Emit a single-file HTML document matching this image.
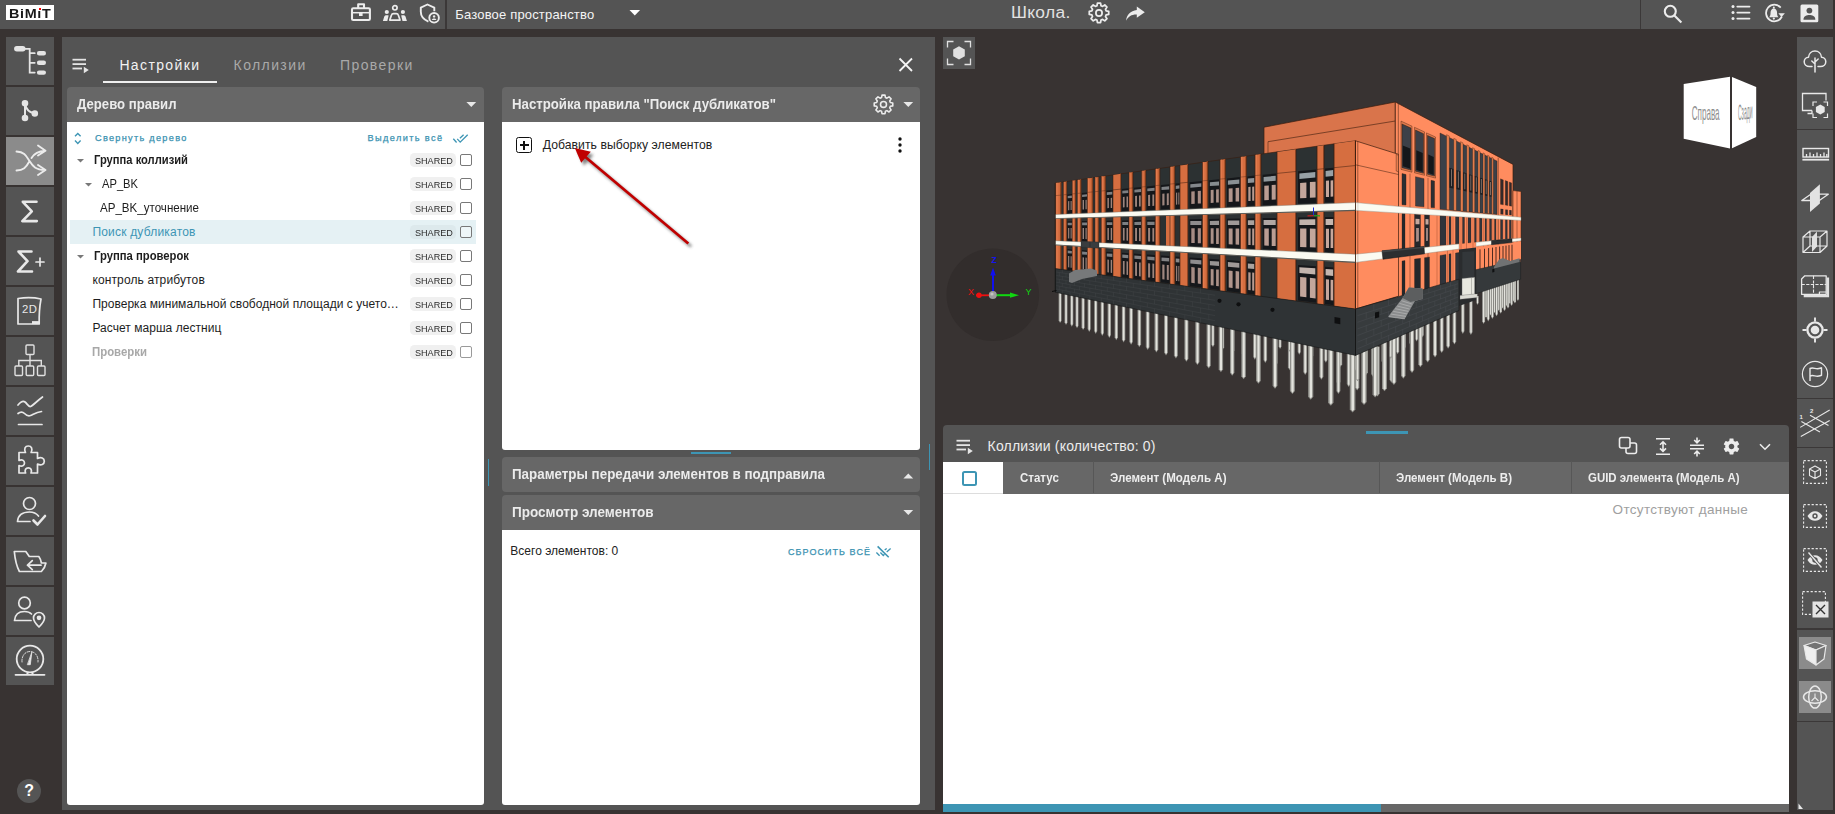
<!DOCTYPE html>
<html lang="ru"><head><meta charset="utf-8"><title>BIMIT</title>
<style>
*{box-sizing:border-box;margin:0;padding:0}
html,body{width:1835px;height:814px;overflow:hidden;background:#383332;font-family:"Liberation Sans",sans-serif;}
body{position:relative;color:#e4e4e4}
.abs{position:absolute}
.t{position:absolute;white-space:nowrap;line-height:1;transform-origin:0 0}
svg{position:absolute;overflow:visible}
.topbar{left:0;top:0;width:1833px;height:29.300px;background:#545454}
.sb{left:6px;width:48px;height:48px;background:#545454}
.sb.on{background:#8b8b8b}
.panel{left:62px;top:37px;width:873px;height:773px;background:#545454}
.hdr{background:#676767;border-radius:4px 4px 0 0;height:35px}
.white{background:#fff}
.row .t{font-size:12px;color:#1d1d1d}
.badge{position:absolute;left:410.300px;width:45.300px;height:13.500px;border-radius:4.500px;background:#f0f0f0}
.badge.sel{background:#dde9ec}
.cb{position:absolute;left:460.200px;width:12px;height:12px;border:1.100px solid #787878;border-radius:2px;background:#fff}
.sh{font-size:9.5px;color:#2b2b2b;left:414.5px}
.rt{left:1797px;top:37px;width:36px;height:773px;background:#545454}
.sep{position:absolute;left:1797px;width:36px;height:1.5px;background:#3b3838}
</style></head><body>
<!-- TOP BAR -->
<div class="abs topbar"></div>
<div class="abs" style="left:6px;top:5px;width:48px;height:15px;background:#fff"></div>
<div class="t" style="left:9.400px;top:7.500px;font-size:12.200px;font-weight:bold;color:#1a1a1a;letter-spacing:.55px;transform:scaleX(1.18)">BiMıT</div>
<div class="abs" style="left:39.100px;top:8.100px;width:2px;height:1.900px;background:#f00"></div>
<div class="abs" style="left:445px;top:0;width:1.5px;height:29px;background:#3b3838"></div>
<div class="abs" style="left:1639.5px;top:0;width:1.5px;height:29px;background:#3b3838"></div>
<!-- briefcase -->
<svg style="left:350px;top:3px" width="22" height="20" viewBox="0 0 22 20" fill="none" stroke="#ececec" stroke-width="2.100" stroke-linejoin="round"><rect x="2" y="5.300" width="17.900" height="11.700" rx="1.200"/><path d="M8.200 5.300V1.200h5.800v4.100"/><path d="M2 9.700h17.900" stroke-width="1.500"/><rect x="9" y="10" width="3.600" height="3" fill="#ececec" stroke="none"/></svg>
<!-- people -->
<svg style="left:382px;top:4px" width="26" height="18" viewBox="0 0 26 18" fill="#ececec"><circle cx="12.900" cy="3.800" r="2.200" fill="none" stroke="#ececec" stroke-width="1.700"/><path d="M7.800 16.100l1.700-5.200c.3-1 1-1.300 2-1.300h2.800c1 0 1.700.3 2 1.300l1.700 5.200z" fill="none" stroke="#ececec" stroke-width="1.700" stroke-linejoin="round"/><circle cx="4.800" cy="8" r="2.100"/><circle cx="20.900" cy="8" r="2.100"/><path d="M.9 16.900l1.300-4.100c.4-1.200 1.400-1.600 2.600-1.600h1.100c.5 0 .8.300.6.900l-1.200 4.800zM24.900 16.900l-1.300-4.100c-.4-1.200-1.400-1.600-2.600-1.600h-1.100c-.5 0-.8.300-.6.900l1.200 4.800z"/></svg>
<!-- shield user -->
<svg style="left:418px;top:3px" width="24" height="22" viewBox="0 0 24 22" fill="none" stroke="#ececec" stroke-width="1.900" stroke-linejoin="round"><path d="M10.400 18.600C5.600 16.600 2.800 13 2.800 8.800V4.600L9.400 1.500l6.900 3.100v3.600"/><circle cx="16.100" cy="14.800" r="4.800"/><circle cx="16.100" cy="13.400" r="1.200" fill="#ececec" stroke="none"/><path d="M13.800 17c.4-1.100 1.200-1.500 2.300-1.500s1.900.4 2.300 1.500z" fill="#ececec" stroke="none"/></svg>
<div class="t" style="letter-spacing:0.173px;left:455.300px;top:7.500px;font-size:13px;color:#f4f4f4">Базовое пространство</div>
<svg style="left:629px;top:10px" width="12" height="7" viewBox="0 0 12 7"><path d="M0.500 0h10.600L5.800 5.400z" fill="#fff"/></svg>
<div class="t" style="letter-spacing:0.352px;left:1010.900px;top:4px;font-size:17.400px;color:#e2e2e2">Школа.</div>
<!-- gear outline -->
<svg style="left:1088px;top:2px" width="22" height="22" viewBox="0 0 24 24" fill="none" stroke="#ececec" stroke-width="1.9" stroke-linejoin="round"><path d="M10.300 2.500h3.400l.5 2.800 1.700.7 2.400-1.600 2.400 2.400-1.600 2.400.7 1.700 2.800.5v3.400l-2.800.5-.7 1.700 1.600 2.400-2.400 2.400-2.400-1.600-1.700.7-.5 2.800h-3.400l-.5-2.800-1.700-.7-2.400 1.600-2.400-2.400 1.600-2.400-.7-1.700-2.800-.5v-3.400l2.800-.5.700-1.700-1.600-2.400 2.400-2.400 2.400 1.600 1.700-.7z" transform="translate(0,-1.200)"/><circle cx="12" cy="11.900" r="3.400"/></svg>
<!-- share arrow -->
<svg style="left:1125.300px;top:5.800px" width="21" height="16" viewBox="0 0 21 16"><path d="M11.800 0.600l8 5.600-8 5.600V8.600C6.800 8.400 3.400 10.400 1 14.800 1.600 9 5.400 4.600 11.800 3.900z" fill="#ececec"/></svg>
<!-- search -->
<svg style="left:1662.200px;top:2.500px" width="22" height="22" viewBox="0 0 22 22" fill="none" stroke="#ececec" stroke-width="2.100"><circle cx="8.300" cy="8.300" r="5.500"/><path d="M12.400 12.400l7 7"/></svg>
<!-- list -->
<svg style="left:1730px;top:3px" width="22" height="20" viewBox="0 0 22 20" fill="#ececec"><circle cx="3" cy="3.600" r="1.500"/><circle cx="3" cy="9.600" r="1.500"/><circle cx="3" cy="15.600" r="1.500"/><rect x="6.400" y="2.700" width="14" height="1.800" rx=".9"/><rect x="6.400" y="8.700" width="14" height="1.800" rx=".9"/><rect x="6.400" y="14.700" width="14" height="1.800" rx=".9"/></svg>
<!-- bell refresh -->
<svg style="left:1763px;top:2px" width="24" height="23" viewBox="0 0 24 23" fill="none" stroke="#ececec" stroke-width="1.800"><path d="M17.700 5.600A8.300 8.300 0 1 0 18.900 14.500"/><path d="M15.300 11.200h6.600l-3.300 3.700z" fill="#ececec" stroke="none"/><g transform="translate(10.800,11) scale(1.250) translate(-11,-11)" fill="#ececec" stroke="none"><path d="M7.300 14.300h7.400c-.9-.9-1.100-1.700-1.100-3.700 0-1.900-1.100-3.300-2.600-3.300s-2.600 1.400-2.600 3.300c0 2-.2 2.800-1.100 3.700z"/><circle cx="11" cy="15.400" r=".9"/><circle cx="11" cy="6.700" r=".8"/></g></svg>
<!-- account box -->
<svg style="left:1799.500px;top:3.600px" width="20" height="20" viewBox="0 0 20 20"><rect x=".5" y=".5" width="17.800" height="17.800" rx="1.500" fill="#ececec"/><circle cx="9.400" cy="6.600" r="2.900" fill="#555"/><path d="M3.500 15.200c0-2.700 3.300-4.100 5.900-4.100s5.900 1.400 5.900 4.100v.6H3.500z" fill="#555"/></svg>
<!-- SIDEBAR -->
<div class="abs sb" style="top:37px"></div><div class="abs sb" style="top:87px"></div><div class="abs sb on" style="top:137px"></div><div class="abs sb" style="top:187px"></div><div class="abs sb" style="top:237px"></div><div class="abs sb" style="top:287px"></div><div class="abs sb" style="top:337px"></div><div class="abs sb" style="top:387px"></div><div class="abs sb" style="top:437px"></div><div class="abs sb" style="top:487px"></div><div class="abs sb" style="top:537px"></div><div class="abs sb" style="top:587px"></div><div class="abs sb" style="top:637px"></div>
<!-- 1 tree -->
<svg style="left:6px;top:37px" width="48" height="48" viewBox="0 0 48 48" fill="none" stroke="#e4e4e4" stroke-width="1.800" stroke-linecap="round"><path d="M10.800 11.800h6" stroke-width="5.400"/><path d="M19 11.800h4.700v23.800h5M23.700 25.800h5M23.700 16.200h5"/><path d="M33.100 16.200h4.700M33.100 25.800h4.700M33.100 35.600h4.700" stroke-width="4.400"/></svg>
<!-- 2 branch -->
<svg style="left:6px;top:87px" width="48" height="48" viewBox="0 0 48 48" fill="#e4e4e4" stroke="#e4e4e4" stroke-width="2"><circle cx="19" cy="16.200" r="2.300"/><circle cx="19" cy="31" r="2.300"/><circle cx="28.800" cy="26.500" r="2.300"/><path d="M19 16v15M19.200 17.500c1 5.500 4.500 8 9.300 9" fill="none"/></svg>
<!-- 3 shuffle -->
<svg style="left:6px;top:137px" width="48" height="48" viewBox="0 0 48 48" fill="none" stroke="#ececec" stroke-width="1.900" stroke-linecap="round" stroke-linejoin="round"><path d="M10.500 14.500c8 .5 9.500 4 13 9.500s6 8.700 15.500 9M10.500 33.500c7-.3 9.500-3 12.500-8.500M25.500 21c2.700-4.500 6.500-6.800 13.500-7M32 8.500l7.500 5.300-7.500 4.700M32 28l7.500 5-7.500 5"/></svg>
<!-- 4 sigma -->
<svg style="left:6px;top:187px" width="48" height="48" viewBox="0 0 48 48" fill="none" stroke="#e8e8e8" stroke-width="2.600" stroke-linecap="round" stroke-linejoin="round"><path d="M30.500 14.800H16.800l9 9.500-9.500 9.800h14.500"/></svg>
<!-- 5 sigma+ -->
<svg style="left:6px;top:237px" width="48" height="48" viewBox="0 0 48 48" fill="none" stroke="#e8e8e8" stroke-width="2.600" stroke-linecap="round" stroke-linejoin="round"><path d="M25.500 14.500H12.500l9 9.700-9.500 10.300h14"/><path d="M30 25h8M34 21v8" stroke-width="1.700"/></svg>
<!-- 6 2D -->
<svg style="left:6px;top:287px" width="48" height="48" viewBox="0 0 48 48" fill="none" stroke="#e8e8e8" stroke-width="1.700" stroke-linejoin="round"><path d="M12 11.500c7-1.200 16-1.200 23 .5-1.500 8-2 16-1.800 25H12z"/><path d="M26 35.600h7" stroke-width="3"/></svg>
<div class="t" style="left:22px;top:304.300px;font-size:11.300px;color:#e8e8e8;letter-spacing:.5px">2D</div>
<!-- 7 org -->
<svg style="left:6px;top:337px" width="48" height="48" viewBox="0 0 48 48" fill="none" stroke="#e0e0e0" stroke-width="1.400"><rect x="20" y="8" width="8" height="9.500" rx="1"/><rect x="9" y="29" width="7.500" height="9.500" rx="1"/><rect x="20.200" y="29" width="7.500" height="9.500" rx="1"/><rect x="31.500" y="29" width="7.500" height="9.500" rx="1"/><path d="M24 17.500V29M12.800 29v-5.500h22.500V29"/></svg>
<!-- 8 chart -->
<svg style="left:6px;top:387px" width="48" height="48" viewBox="0 0 48 48" fill="none" stroke="#e8e8e8" stroke-width="1.700" stroke-linecap="round" stroke-linejoin="round"><path d="M12 18c3-3.500 5-4.500 7-3s3.500 5 5.500 4.500 6.500-5.500 12-9.500M12 26.500c2.500-2 4.500-2 6.500 0s3.500 3 6 2 6-3.500 11-4M12.500 37.500h23.500"/></svg>
<!-- 9 puzzle -->
<svg style="left:6px;top:437px" width="48" height="48" viewBox="0 0 48 48" fill="none" stroke="#e8e8e8" stroke-width="1.700" stroke-linejoin="round"><path d="M13 15.500h6.500c-1.800-3.700-.4-6.500 2.800-6.500s4.600 2.800 2.800 6.500H31.500v6c3.700-1.800 6.800-.4 6.800 2.800s-3.100 4.600-6.800 2.800V36h-6.500c1.200-3-.2-5.200-2.700-5.200S18.400 33 19.600 36H13v-7.500c3 1.400 5.500.2 5.500-2.500s-2.500-4-5.500-2.600z"/></svg>
<!-- 10 user check -->
<svg style="left:6px;top:487px" width="48" height="48" viewBox="0 0 48 48" fill="none" stroke="#e8e8e8" stroke-width="1.700" stroke-linecap="round" stroke-linejoin="round"><circle cx="23.500" cy="16.500" r="6"/><path d="M11.500 34.500c.5-6 5-9.500 12-9.500 4 0 7 1.500 9 4M11.500 34.500H24"/><path d="M27.500 33.500l4 4 7.500-8.500" stroke-width="2.600"/></svg>
<!-- 11 folder -->
<svg style="left:6px;top:537px" width="48" height="48" viewBox="0 0 48 48" fill="none" stroke="#e8e8e8" stroke-width="1.700" stroke-linecap="round" stroke-linejoin="round"><path d="M8.300 14.500h11.500l3.500 5h9.500c1.500 2 2.300 4.500 2.600 6.500h4.500c-.5 3-2.500 6.500-4.500 8.500H13.400C10.500 29 9 22 8.300 14.500z"/><path d="M35 28.200H21.500M26.300 23.700l-4.800 4.500 4.800 4.500"/></svg>
<!-- 12 user pin -->
<svg style="left:6px;top:587px" width="48" height="48" viewBox="0 0 48 48" fill="none" stroke="#e8e8e8" stroke-width="1.700" stroke-linecap="round" stroke-linejoin="round"><circle cx="18.500" cy="16" r="5.800"/><path d="M8.500 33.500c.5-6 4.500-9 10-9 3 0 5.500 1 7 2.500M8.500 33.500H25"/><path d="M33 40c-3.500-3.500-5.500-6.200-5.500-9a5.500 5.500 0 0 1 11 0c0 2.800-2 5.500-5.500 9z"/><circle cx="33" cy="30.800" r="1.500" fill="#e8e8e8"/></svg>
<!-- 13 gauge -->
<svg style="left:6px;top:637px" width="48" height="48" viewBox="0 0 48 48" fill="none" stroke="#e8e8e8" stroke-width="1.800" stroke-linecap="round"><circle cx="24" cy="22" r="13.300"/><path d="M9.500 37.800h29M22 35.500l-1 2M26 35.500l1 2"/><path d="M16 25c-.5-6 3-10.500 8-10.500s8.500 4.500 8 10.500" stroke-width=".9" stroke-dasharray="2.500 1.500"/><path d="M25.800 15.500l-1.500 12.200h-2.600z" fill="#e8e8e8" stroke-width=".8"/></svg>
<!-- help -->
<div class="abs" style="left:17px;top:778.500px;width:24px;height:24px;border-radius:12px;background:#555"></div>
<div class="t" style="left:24.200px;top:782.500px;font-size:16px;font-weight:bold;color:#fff">?</div>
<!-- MAIN PANEL -->
<div class="abs panel"></div>
<svg style="left:72px;top:58px" width="20" height="16" viewBox="0 0 20 16" fill="#e4e4e4"><rect x=".5" y=".8" width="13.500" height="1.800"/><rect x=".5" y="5.200" width="13.500" height="1.800"/><rect x=".5" y="9.600" width="9.500" height="1.800"/><path d="M11.800 8.800l5 3.200-5 3.200z"/></svg>
<div class="t" style="letter-spacing:1.372px;left:119.400px;top:57.700px;font-size:14px;color:#f2f2f2">Настройки</div>
<div class="t" style="letter-spacing:1.393px;left:233.600px;top:57.700px;font-size:14px;color:#a9a9a9">Коллизии</div>
<div class="t" style="letter-spacing:1.408px;left:340px;top:57.700px;font-size:14px;color:#a9a9a9">Проверки</div>
<div class="abs" style="left:103px;top:80.800px;width:114px;height:2.200px;background:#efefef"></div>
<svg style="left:898px;top:57px" width="16" height="16" viewBox="0 0 16 16" stroke="#f4f4f4" stroke-width="1.800"><path d="M1.500 1.500l12.500 12.500M14 1.500L1.500 14"/></svg>
<!-- tree panel -->
<div class="abs hdr" style="left:67px;top:87px;width:417px"></div>
<div class="abs white" style="left:67px;top:122px;width:417px;height:683px;border-radius:0 0 3px 3px"></div>
<div class="t" style="transform:scaleX(0.9383);left:77.100px;top:97px;font-size:14px;font-weight:bold;color:#ebebeb">Дерево правил</div>
<svg style="left:466px;top:101.500px" width="11" height="6" viewBox="0 0 11 6"><path d="M.4 0h9.800L5.300 5z" fill="#e8e8e8"/></svg>
<svg style="left:73px;top:132px" width="10" height="13" viewBox="0 0 10 13" fill="none" stroke="#3d95b4" stroke-width="1.400"><path d="M2 4.200l2.800-2.800 2.800 2.800M2 8.600l2.800 2.800 2.800-2.800"/></svg>
<div class="t" style="letter-spacing:1.277px;left:95px;top:134.100px;font-size:9.200px;color:#3a92b1;-webkit-text-stroke:.25px #3a92b1">Свернуть дерево</div>
<div class="t" style="letter-spacing:1.382px;left:367.500px;top:134.100px;font-size:9.200px;color:#3a92b1;-webkit-text-stroke:.25px #3a92b1">Выделить всё</div>
<svg style="left:452px;top:132.500px" width="18" height="11" viewBox="0 0 18 11" fill="none" stroke="#3d95b4" stroke-width="1.200"><path d="M1.300 5.800L4.600 9.500M5.200 5.900L8.200 9.100 15.700 1.800M7.900 5.300L11.600 1.800" stroke-width="1.300"/></svg>
<div class="abs" style="left:70px;top:220px;width:406px;height:24px;background:#e5f1f4"></div>
<div class="row">
<svg style="left:76.500px;top:158.500px" width="7" height="4" viewBox="0 0 7 4"><path d="M0 0h7L3.500 3.600z" fill="#787878"/></svg>
<div class="t" style="transform:scaleX(0.9314);left:94.300px;top:154px;font-weight:bold">Группа коллизий</div>
<svg style="left:84.500px;top:182.500px" width="7" height="4" viewBox="0 0 7 4"><path d="M0 0h7L3.500 3.600z" fill="#787878"/></svg>
<div class="t" style="transform:scaleX(0.9302);left:102.200px;top:178px">AP_BK</div>
<div class="t" style="transform:scaleX(0.9639);left:100px;top:202px">AP_BK_уточнение</div>
<div class="t" style="letter-spacing:0.199px;left:92.400px;top:226px;color:#3d95b4">Поиск дубликатов</div>
<svg style="left:76.500px;top:254.500px" width="7" height="4" viewBox="0 0 7 4"><path d="M0 0h7L3.500 3.600z" fill="#787878"/></svg>
<div class="t" style="transform:scaleX(0.9390);left:94.100px;top:250px;font-weight:bold">Группа проверок</div>
<div class="t" style="letter-spacing:0.130px;left:92.400px;top:274px">контроль атрибутов</div>
<div class="t" style="letter-spacing:0.027px;left:92.400px;top:298px">Проверка минимальной свободной площади с учето…</div>
<div class="t" style="letter-spacing:0.045px;left:92.400px;top:322px">Расчет марша лестниц</div>
<div class="t" style="transform:scaleX(0.9501);left:92.400px;top:346px;font-weight:bold;color:#a8a8a8">Проверки</div>
</div>
<div class="badge" style="top:153.300px"></div><div class="badge" style="top:177.300px"></div><div class="badge" style="top:201.300px"></div><div class="badge sel" style="top:225.300px"></div><div class="badge" style="top:249.300px"></div><div class="badge" style="top:273.300px"></div><div class="badge" style="top:297.300px"></div><div class="badge" style="top:321.300px"></div><div class="badge" style="top:345.300px"></div>
<div class="t sh" style="transform:scaleX(0.9547);top:155.900px">SHARED</div><div class="t sh" style="transform:scaleX(0.9547);top:179.900px">SHARED</div><div class="t sh" style="transform:scaleX(0.9547);top:203.900px">SHARED</div><div class="t sh" style="transform:scaleX(0.9547);top:227.900px">SHARED</div><div class="t sh" style="transform:scaleX(0.9547);top:251.900px">SHARED</div><div class="t sh" style="transform:scaleX(0.9547);top:275.900px">SHARED</div><div class="t sh" style="transform:scaleX(0.9547);top:299.900px">SHARED</div><div class="t sh" style="transform:scaleX(0.9547);top:323.900px">SHARED</div><div class="t sh" style="transform:scaleX(0.9547);top:347.900px">SHARED</div>
<div class="cb" style="top:154px"></div><div class="cb" style="top:178px"></div><div class="cb" style="top:202px"></div><div class="cb" style="top:226px;background:#eef6f8"></div><div class="cb" style="top:250px"></div><div class="cb" style="top:274px"></div><div class="cb" style="top:298px"></div><div class="cb" style="top:322px"></div><div class="cb" style="top:346px;border-color:#9a9a9a"></div>
<!-- mid panel -->
<div class="abs hdr" style="left:502px;top:87px;width:418px"></div>
<div class="abs white" style="left:502px;top:122px;width:418px;height:328px;border-radius:0 0 3px 3px"></div>
<div class="t" style="transform:scaleX(0.9430);left:512.300px;top:97px;font-size:14px;font-weight:bold;color:#ebebeb">Настройка правила "Поиск дубликатов"</div>
<svg style="left:873px;top:93.500px" width="21" height="21" viewBox="0 0 24 24" fill="none" stroke="#ececec" stroke-width="1.800" stroke-linejoin="round"><path d="M10.300 2.500h3.400l.5 2.800 1.700.7 2.400-1.600 2.400 2.400-1.600 2.400.7 1.700 2.800.5v3.400l-2.800.5-.7 1.700 1.600 2.400-2.400 2.400-2.400-1.600-1.700.7-.5 2.800h-3.400l-.5-2.800-1.700-.7-2.400 1.600-2.400-2.400 1.600-2.400-.7-1.700-2.800-.5v-3.400l2.800-.5.700-1.700-1.600-2.400 2.400-2.400 2.400 1.600 1.700-.7z" transform="translate(0,-1.200)"/><circle cx="12" cy="11.900" r="3.400"/></svg>
<svg style="left:902.500px;top:101.500px" width="11" height="6" viewBox="0 0 11 6"><path d="M.4 0h9.800L5.300 5z" fill="#e8e8e8"/></svg>
<div class="abs" style="left:516px;top:137px;width:16px;height:16px;border:1.500px solid #111;border-radius:2.500px"></div>
<div class="abs" style="left:519.500px;top:144.400px;width:9px;height:1.200px;background:#111"></div>
<div class="abs" style="left:523.400px;top:140.500px;width:1.200px;height:9px;background:#111"></div>
<div class="t" style="letter-spacing:0.050px;left:542.700px;top:138.800px;font-size:12.200px;color:#222">Добавить выборку элементов</div>
<svg style="left:897px;top:136px" width="6" height="18" viewBox="0 0 6 18" fill="#111"><circle cx="3" cy="3" r="1.700"/><circle cx="3" cy="9" r="1.700"/><circle cx="3" cy="15" r="1.700"/></svg>
<!-- red arrow -->
<svg style="left:0;top:0" width="1835" height="814" viewBox="0 0 1835 814"><defs><filter id="ash" x="-20%" y="-20%" width="140%" height="140%"><feGaussianBlur stdDeviation="1.700"/></filter></defs>
<g transform="translate(2.800,3)" opacity=".6" filter="url(#ash)"><path d="M688.300 243.500L583 155" stroke="#333" stroke-width="2.800" fill="none"/><path d="M574.800 148l16 3.800-9.600 10.900z" fill="#333"/></g>
<path d="M688.300 243.500L583 155" stroke="#c00000" stroke-width="2.700" fill="none"/><path d="M574.800 148l16 3.800-9.600 10.900z" fill="#c00000"/></svg>
<!-- resize handles -->
<div class="abs" style="left:691px;top:451.500px;width:40px;height:2px;background:#3d95b4"></div>
<div class="abs" style="left:487.500px;top:459px;width:1.500px;height:27px;background:#3d95b4"></div>
<div class="abs" style="left:928.500px;top:444px;width:1.500px;height:26px;background:#3d95b4"></div>
<!-- params header -->
<div class="abs hdr" style="left:502px;top:457px;width:418px;border-radius:4px"></div>
<div class="t" style="transform:scaleX(0.9547);left:512.300px;top:467px;font-size:14px;font-weight:bold;color:#ebebeb">Параметры передачи элементов в подправила</div>
<svg style="left:902.500px;top:472.500px" width="11" height="6" viewBox="0 0 11 6"><path d="M.4 5.500h9.800L5.300.5z" fill="#e8e8e8"/></svg>
<!-- view header -->
<div class="abs hdr" style="left:502px;top:495px;width:418px"></div>
<div class="abs white" style="left:502px;top:530px;width:418px;height:275px;border-radius:0 0 3px 3px"></div>
<div class="t" style="transform:scaleX(0.9655);left:512.300px;top:505px;font-size:14px;font-weight:bold;color:#ebebeb">Просмотр элементов</div>
<svg style="left:902.500px;top:509.500px" width="11" height="6" viewBox="0 0 11 6"><path d="M.4 0h9.800L5.300 5z" fill="#e8e8e8"/></svg>
<div class="t" style="letter-spacing:0.020px;left:510.300px;top:544.500px;font-size:12px;color:#222">Всего элементов: 0</div>
<div class="t" style="letter-spacing:1.059px;left:788px;top:548.300px;font-size:9px;color:#3a92b1;-webkit-text-stroke:.25px #3a92b1">СБРОСИТЬ ВСЁ</div>
<svg style="left:875px;top:545px" width="18" height="13" viewBox="0 0 18 13" fill="none" stroke="#3d95b4" stroke-width="1.200"><path d="M2.600 1.400L13.700 12.300" stroke-width="1.600"/><path d="M1.400 7.500L4.600 10.800M5.400 7.500L8.300 10.500 9.500 9.300M9.700 5.100L11.700 3.400M11.700 7L15.600 3.500" stroke-width="1.300"/></svg>
<!-- VIEWER -->
<svg class="bld" width="1835" height="814" viewBox="0 0 1835 814" fill="none"><polygon points="1211.3,309.6 1214.4,309.6 1214.4,344.4 1212.9,347.2 1211.3,344.4" fill="#8e8e89"/><polygon points="1212.2,309.6 1213.7,309.6 1213.7,344.4 1212.9,346.1 1212.2,344.4" fill="#e3e3dd"/><polygon points="1221.1,311.8 1224.2,311.8 1224.2,347.3 1222.6,350.2 1221.1,347.3" fill="#8e8e89"/><polygon points="1221.9,311.8 1223.5,311.8 1223.5,347.3 1222.7,349 1221.9,347.3" fill="#e3e3dd"/><polygon points="1231.3,314.1 1234.5,314.1 1234.5,350.3 1232.9,353.2 1231.3,350.3" fill="#8e8e89"/><polygon points="1232.2,314.1 1233.7,314.1 1233.7,350.3 1232.9,352.1 1232.2,350.3" fill="#e3e3dd"/><polygon points="1241.7,316.5 1245.1,316.5 1245.1,353.4 1243.4,356.4 1241.7,353.4" fill="#8e8e89"/><polygon points="1242.7,316.5 1244.3,316.5 1244.3,353.4 1243.5,355.2 1242.7,353.4" fill="#e3e3dd"/><polygon points="1253.1,319 1256.5,319 1256.5,356.8 1254.8,359.8 1253.1,356.8" fill="#8e8e89"/><polygon points="1254,319 1255.7,319 1255.7,356.8 1254.8,358.6 1254,356.8" fill="#e3e3dd"/><polygon points="1263.5,321.4 1267.1,321.4 1267.1,360 1265.3,363 1263.5,360" fill="#8e8e89"/><polygon points="1264.5,321.4 1266.2,321.4 1266.2,360 1265.4,361.8 1264.5,360" fill="#e3e3dd"/><polygon points="1274.1,323.8 1277.7,323.8 1277.7,363.1 1275.9,366.1 1274.1,363.1" fill="#8e8e89"/><polygon points="1275.1,323.8 1276.9,323.8 1276.9,363.1 1276,364.9 1275.1,363.1" fill="#e3e3dd"/><polygon points="1287.9,326.9 1291.6,326.9 1291.6,367.3 1289.7,370.3 1287.9,367.3" fill="#8e8e89"/><polygon points="1288.9,326.9 1290.7,326.9 1290.7,367.3 1289.8,369.1 1288.9,367.3" fill="#e3e3dd"/><polygon points="1303.3,330.4 1307.1,330.4 1307.1,371.9 1305.2,374.9 1303.3,371.9" fill="#8e8e89"/><polygon points="1304.3,330.4 1306.2,330.4 1306.2,371.9 1305.2,373.7 1304.3,371.9" fill="#e3e3dd"/><polygon points="1319.4,334.1 1323.4,334.1 1323.4,376.8 1321.4,379.8 1319.4,376.8" fill="#8e8e89"/><polygon points="1320.5,334.1 1322.4,334.1 1322.4,376.8 1321.5,378.6 1320.5,376.8" fill="#e3e3dd"/><polygon points="1336.4,338 1340.5,338 1340.5,381.9 1338.4,384.9 1336.4,381.9" fill="#8e8e89"/><polygon points="1337.5,338 1339.5,338 1339.5,381.9 1338.5,383.7 1337.5,381.9" fill="#e3e3dd"/><polygon points="1355,342.2 1359.3,342.2 1359.3,387.5 1357.2,390.5 1355,387.5" fill="#8e8e89"/><polygon points="1356.2,342.2 1358.3,342.2 1358.3,387.5 1357.2,389.3 1356.2,387.5" fill="#e3e3dd"/><polygon points="1375.2,346.8 1379.7,346.8 1379.7,393.6 1377.5,396.6 1375.2,393.6" fill="#8e8e89"/><polygon points="1376.5,346.8 1378.6,346.8 1378.6,393.6 1377.5,395.4 1376.5,393.6" fill="#e3e3dd"/><polygon points="1278.6,319 1281.5,319 1281.5,346.3 1280.1,348.9 1278.6,346.3" fill="#8e8e89"/><polygon points="1279.4,319 1280.8,319 1280.8,346.3 1280.1,347.9 1279.4,346.3" fill="#e3e3dd"/><polygon points="1288.1,321.4 1291.1,321.4 1291.1,349.1 1289.6,351.8 1288.1,349.1" fill="#8e8e89"/><polygon points="1289,321.4 1290.4,321.4 1290.4,349.1 1289.7,350.7 1289,349.1" fill="#e3e3dd"/><polygon points="1297.7,323.8 1300.8,323.8 1300.8,352 1299.3,354.7 1297.7,352" fill="#8e8e89"/><polygon points="1298.6,323.8 1300.1,323.8 1300.1,352 1299.3,353.6 1298.6,352" fill="#e3e3dd"/><polygon points="1310.2,326.9 1313.3,326.9 1313.3,355.7 1311.8,358.5 1310.2,355.7" fill="#8e8e89"/><polygon points="1311.1,326.9 1312.6,326.9 1312.6,355.7 1311.8,357.4 1311.1,355.7" fill="#e3e3dd"/><polygon points="1324.2,330.4 1327.4,330.4 1327.4,359.9 1325.8,362.8 1324.2,359.9" fill="#8e8e89"/><polygon points="1325.1,330.4 1326.6,330.4 1326.6,359.9 1325.9,361.6 1325.1,359.9" fill="#e3e3dd"/><polygon points="1338.8,334.1 1342.2,334.1 1342.2,364.2 1340.5,367.2 1338.8,364.2" fill="#8e8e89"/><polygon points="1339.8,334.1 1341.4,334.1 1341.4,364.2 1340.6,366 1339.8,364.2" fill="#e3e3dd"/><polygon points="1354.2,338 1357.7,338 1357.7,368.9 1356,371.9 1354.2,368.9" fill="#8e8e89"/><polygon points="1355.2,338 1356.9,338 1356.9,368.9 1356,370.7 1355.2,368.9" fill="#e3e3dd"/><polygon points="1371.1,342.2 1374.8,342.2 1374.8,374.1 1373,377.1 1371.1,374.1" fill="#8e8e89"/><polygon points="1372.2,342.2 1373.9,342.2 1373.9,374.1 1373,375.9 1372.2,374.1" fill="#e3e3dd"/><polygon points="1389.5,346.8 1393.2,346.8 1393.2,379.7 1391.4,382.7 1389.5,379.7" fill="#8e8e89"/><polygon points="1390.5,346.8 1392.3,346.8 1392.3,379.7 1391.4,381.5 1390.5,379.7" fill="#e3e3dd"/><polygon points="1336.4,343.4 1340.4,343.4 1340.4,391 1338.4,394 1336.4,391" fill="#8e8e89"/><polygon points="1337.5,343.4 1339.4,343.4 1339.4,391 1338.5,392.8 1337.5,391" fill="#e3e3dd"/><polygon points="1346.8,338.3 1350.6,338.3 1350.6,384.1 1348.7,387.1 1346.8,384.1" fill="#8e8e89"/><polygon points="1347.9,338.3 1349.7,338.3 1349.7,384.1 1348.8,385.9 1347.9,384.1" fill="#e3e3dd"/><polygon points="1355.6,333.9 1359.3,333.9 1359.3,378.2 1357.4,381.2 1355.6,378.2" fill="#8e8e89"/><polygon points="1356.6,333.9 1358.4,333.9 1358.4,378.2 1357.5,380 1356.6,378.2" fill="#e3e3dd"/><polygon points="1364.4,329.5 1368,329.5 1368,372.3 1366.2,375.3 1364.4,372.3" fill="#8e8e89"/><polygon points="1365.4,329.5 1367.1,329.5 1367.1,372.3 1366.3,374.1 1365.4,372.3" fill="#e3e3dd"/><polygon points="1373.2,325.1 1376.6,325.1 1376.6,366.4 1374.9,369.4 1373.2,366.4" fill="#8e8e89"/><polygon points="1374.2,325.1 1375.8,325.1 1375.8,366.4 1375,368.2 1374.2,366.4" fill="#e3e3dd"/><polygon points="1381.4,321.1 1384.7,321.1 1384.7,361 1383,364 1381.4,361" fill="#8e8e89"/><polygon points="1382.3,321.1 1383.9,321.1 1383.9,361 1383.1,362.8 1382.3,361" fill="#e3e3dd"/><polygon points="1389.2,317.2 1392.4,317.2 1392.4,355.9 1390.8,358.7 1389.2,355.9" fill="#8e8e89"/><polygon points="1390.1,317.2 1391.7,317.2 1391.7,355.9 1390.9,357.6 1390.1,355.9" fill="#e3e3dd"/><polygon points="1396.1,313.8 1399.2,313.8 1399.2,351.4 1397.6,354.2 1396.1,351.4" fill="#8e8e89"/><polygon points="1396.9,313.8 1398.4,313.8 1398.4,351.4 1397.7,353.1 1396.9,351.4" fill="#e3e3dd"/><polygon points="1402.9,310.3 1405.9,310.3 1405.9,346.9 1404.4,349.6 1402.9,346.9" fill="#8e8e89"/><polygon points="1403.8,310.3 1405.2,310.3 1405.2,346.9 1404.5,348.5 1403.8,346.9" fill="#e3e3dd"/><polygon points="1409.2,307.2 1412.1,307.2 1412.1,342.8 1410.6,345.4 1409.2,342.8" fill="#8e8e89"/><polygon points="1410,307.2 1411.4,307.2 1411.4,342.8 1410.7,344.4 1410,342.8" fill="#e3e3dd"/><polygon points="1415.2,304.2 1418,304.2 1418,338.9 1416.6,341.4 1415.2,338.9" fill="#8e8e89"/><polygon points="1416,304.2 1417.3,304.2 1417.3,338.9 1416.7,340.4 1416,338.9" fill="#e3e3dd"/><polygon points="1421.1,301.3 1423.8,301.3 1423.8,335.1 1422.5,337.5 1421.1,335.1" fill="#8e8e89"/><polygon points="1421.9,301.3 1423.1,301.3 1423.1,335.1 1422.5,336.5 1421.9,335.1" fill="#e3e3dd"/><polygon points="1461.1,296 1464.5,296 1464.5,331 1462.8,334 1461.1,331" fill="#8e8e89"/><polygon points="1462.1,296 1463.7,296 1463.7,331 1462.9,332.8 1462.1,331" fill="#e3e3dd"/><polygon points="1469.2,296 1472.6,296 1472.6,332 1470.9,335 1469.2,332" fill="#8e8e89"/><polygon points="1470.2,296 1471.8,296 1471.8,332 1471,333.8 1470.2,332" fill="#e3e3dd"/><polygon points="1476.3,296 1478.7,296 1478.7,302.8 1477.5,305 1476.3,302.8" fill="#8e8e89"/><polygon points="1477,296 1478.1,296 1478.1,302.8 1477.5,304.1 1477,302.8" fill="#e3e3dd"/><polygon points="1482.1,284.8 1485.1,284.8 1485.1,321.3 1483.6,324 1482.1,321.3" fill="#8e8e89"/><polygon points="1482.9,284.8 1484.4,284.8 1484.4,321.3 1483.7,322.9 1482.9,321.3" fill="#e3e3dd"/><polygon points="1486.8,283.3 1489.7,283.3 1489.7,318.8 1488.2,321.4 1486.8,318.8" fill="#8e8e89"/><polygon points="1487.6,283.3 1489,283.3 1489,318.8 1488.3,320.4 1487.6,318.8" fill="#e3e3dd"/><polygon points="1491,281.7 1493.8,281.7 1493.8,316.4 1492.4,318.9 1491,316.4" fill="#8e8e89"/><polygon points="1491.8,281.7 1493.1,281.7 1493.1,316.4 1492.5,317.9 1491.8,316.4" fill="#e3e3dd"/><polygon points="1495.2,280.2 1497.9,280.2 1497.9,313.9 1496.6,316.3 1495.2,313.9" fill="#8e8e89"/><polygon points="1496,280.2 1497.3,280.2 1497.3,313.9 1496.7,315.4 1496,313.9" fill="#e3e3dd"/><polygon points="1499.4,278.7 1502,278.7 1502,311.4 1500.7,313.8 1499.4,311.4" fill="#8e8e89"/><polygon points="1500.1,278.7 1501.4,278.7 1501.4,311.4 1500.8,312.8 1500.1,311.4" fill="#e3e3dd"/><polygon points="1503.2,277.1 1505.8,277.1 1505.8,309 1504.5,311.2 1503.2,309" fill="#8e8e89"/><polygon points="1504,277.1 1505.2,277.1 1505.2,309 1504.5,310.3 1504,309" fill="#e3e3dd"/><polygon points="1506.8,275.6 1509.2,275.6 1509.2,306.5 1508,308.7 1506.8,306.5" fill="#8e8e89"/><polygon points="1507.5,275.6 1508.6,275.6 1508.6,306.5 1508,307.8 1507.5,306.5" fill="#e3e3dd"/><polygon points="1510.4,274.1 1512.8,274.1 1512.8,304 1511.6,306.1 1510.4,304" fill="#8e8e89"/><polygon points="1511.1,274.1 1512.2,274.1 1512.2,304 1511.6,305.3 1511.1,304" fill="#e3e3dd"/><polygon points="1513.8,272.5 1516,272.5 1516,301.6 1514.9,303.6 1513.8,301.6" fill="#8e8e89"/><polygon points="1514.4,272.5 1515.5,272.5 1515.5,301.6 1514.9,302.8 1514.4,301.6" fill="#e3e3dd"/><polygon points="1516.9,271 1519,271 1519,299.1 1517.9,301 1516.9,299.1" fill="#8e8e89"/><polygon points="1517.4,271 1518.4,271 1518.4,299.1 1517.9,300.2 1517.4,299.1" fill="#e3e3dd"/><polygon points="1485,277 1487,277 1487,316.2 1486,318 1485,316.2" fill="#8e8e89"/><polygon points="1485.6,277 1486.5,277 1486.5,316.2 1486,317.3 1485.6,316.2" fill="#e3e3dd"/><polygon points="1489.4,275.5 1491.4,275.5 1491.4,313.9 1490.4,315.7 1489.4,313.9" fill="#8e8e89"/><polygon points="1490,275.5 1490.9,275.5 1490.9,313.9 1490.4,315 1490,313.9" fill="#e3e3dd"/><polygon points="1493.6,273.9 1495.4,273.9 1495.4,311.6 1494.5,313.3 1493.6,311.6" fill="#8e8e89"/><polygon points="1494.1,273.9 1495,273.9 1495,311.6 1494.5,312.7 1494.1,311.6" fill="#e3e3dd"/><polygon points="1497.8,272.4 1499.6,272.4 1499.6,309.4 1498.7,311 1497.8,309.4" fill="#8e8e89"/><polygon points="1498.3,272.4 1499.2,272.4 1499.2,309.4 1498.7,310.3 1498.3,309.4" fill="#e3e3dd"/><polygon points="1501.7,270.9 1503.5,270.9 1503.5,307.1 1502.6,308.7 1501.7,307.1" fill="#8e8e89"/><polygon points="1502.2,270.9 1503.1,270.9 1503.1,307.1 1502.6,308 1502.2,307.1" fill="#e3e3dd"/><polygon points="1505.4,269.3 1507.2,269.3 1507.2,304.8 1506.3,306.3 1505.4,304.8" fill="#8e8e89"/><polygon points="1505.9,269.3 1506.7,269.3 1506.7,304.8 1506.3,305.7 1505.9,304.8" fill="#e3e3dd"/><polygon points="1509,267.8 1510.6,267.8 1510.6,302.5 1509.8,304 1509,302.5" fill="#8e8e89"/><polygon points="1509.4,267.8 1510.2,267.8 1510.2,302.5 1509.8,303.4 1509.4,302.5" fill="#e3e3dd"/><polygon points="1512.5,266.3 1514.1,266.3 1514.1,300.2 1513.3,301.7 1512.5,300.2" fill="#8e8e89"/><polygon points="1512.9,266.3 1513.7,266.3 1513.7,300.2 1513.3,301.1 1512.9,300.2" fill="#e3e3dd"/><polygon points="1058.6,291.2 1061.6,291.2 1061.6,320.5 1060.1,323.1 1058.6,320.5" fill="#8e8e89"/><polygon points="1059.5,291.2 1060.9,291.2 1060.9,320.5 1060.2,322.1 1059.5,320.5" fill="#e3e3dd"/><polygon points="1064.5,292.4 1067.5,292.4 1067.5,322.2 1066,324.9 1064.5,322.2" fill="#8e8e89"/><polygon points="1065.3,292.4 1066.8,292.4 1066.8,322.2 1066.1,323.8 1065.3,322.2" fill="#e3e3dd"/><polygon points="1070.3,293.6 1073.3,293.6 1073.3,324 1071.8,326.7 1070.3,324" fill="#8e8e89"/><polygon points="1071.1,293.6 1072.6,293.6 1072.6,324 1071.9,325.6 1071.1,324" fill="#e3e3dd"/><polygon points="1075.5,294.7 1078.5,294.7 1078.5,325.5 1077,328.3 1075.5,325.5" fill="#8e8e89"/><polygon points="1076.3,294.7 1077.8,294.7 1077.8,325.5 1077.1,327.2 1076.3,325.5" fill="#e3e3dd"/><polygon points="1081.5,296 1084.7,296 1084.7,327.3 1083.1,330.1 1081.5,327.3" fill="#8e8e89"/><polygon points="1082.4,296 1083.9,296 1083.9,327.3 1083.2,329 1082.4,327.3" fill="#e3e3dd"/><polygon points="1087.6,297.3 1090.8,297.3 1090.8,329.1 1089.2,332 1087.6,329.1" fill="#8e8e89"/><polygon points="1088.5,297.3 1090,297.3 1090,329.1 1089.3,330.9 1088.5,329.1" fill="#e3e3dd"/><polygon points="1094.1,298.7 1097.3,298.7 1097.3,331.1 1095.7,334 1094.1,331.1" fill="#8e8e89"/><polygon points="1095,298.7 1096.5,298.7 1096.5,331.1 1095.8,332.8 1095,331.1" fill="#e3e3dd"/><polygon points="1100.7,300.1 1103.9,300.1 1103.9,333 1102.3,336 1100.7,333" fill="#8e8e89"/><polygon points="1101.6,300.1 1103.2,300.1 1103.2,333 1102.4,334.8 1101.6,333" fill="#e3e3dd"/><polygon points="1107.6,301.5 1111,301.5 1111,335.1 1109.3,338.1 1107.6,335.1" fill="#8e8e89"/><polygon points="1108.6,301.5 1110.2,301.5 1110.2,335.1 1109.4,336.9 1108.6,335.1" fill="#e3e3dd"/><polygon points="1114.6,303 1118,303 1118,337.3 1116.3,340.3 1114.6,337.3" fill="#8e8e89"/><polygon points="1115.5,303 1117.2,303 1117.2,337.3 1116.4,339.1 1115.5,337.3" fill="#e3e3dd"/><polygon points="1121.9,304.6 1125.3,304.6 1125.3,339.5 1123.6,342.5 1121.9,339.5" fill="#8e8e89"/><polygon points="1122.8,304.6 1124.5,304.6 1124.5,339.5 1123.7,341.3 1122.8,339.5" fill="#e3e3dd"/><polygon points="1129.3,306.1 1132.9,306.1 1132.9,341.8 1131.1,344.8 1129.3,341.8" fill="#8e8e89"/><polygon points="1130.3,306.1 1132,306.1 1132,341.8 1131.2,343.6 1130.3,341.8" fill="#e3e3dd"/><polygon points="1137.5,307.9 1141.1,307.9 1141.1,344.3 1139.3,347.3 1137.5,344.3" fill="#8e8e89"/><polygon points="1138.5,307.9 1140.2,307.9 1140.2,344.3 1139.4,346.1 1138.5,344.3" fill="#e3e3dd"/><polygon points="1145.8,309.6 1149.6,309.6 1149.6,346.9 1147.7,349.9 1145.8,346.9" fill="#8e8e89"/><polygon points="1146.9,309.6 1148.7,309.6 1148.7,346.9 1147.8,348.7 1146.9,346.9" fill="#e3e3dd"/><polygon points="1154.5,311.5 1158.3,311.5 1158.3,349.5 1156.4,352.5 1154.5,349.5" fill="#8e8e89"/><polygon points="1155.6,311.5 1157.4,311.5 1157.4,349.5 1156.5,351.3 1155.6,349.5" fill="#e3e3dd"/><polygon points="1164.1,313.5 1167.9,313.5 1167.9,352.5 1166,355.5 1164.1,352.5" fill="#8e8e89"/><polygon points="1165.1,313.5 1167,313.5 1167,352.5 1166.1,354.3 1165.1,352.5" fill="#e3e3dd"/><polygon points="1173.9,315.6 1177.9,315.6 1177.9,355.5 1175.9,358.5 1173.9,355.5" fill="#8e8e89"/><polygon points="1175,315.6 1176.9,315.6 1176.9,355.5 1176,357.3 1175,355.5" fill="#e3e3dd"/><polygon points="1184.4,317.8 1188.4,317.8 1188.4,358.7 1186.4,361.7 1184.4,358.7" fill="#8e8e89"/><polygon points="1185.5,317.8 1187.5,317.8 1187.5,358.7 1186.5,360.5 1185.5,358.7" fill="#e3e3dd"/><polygon points="1195.3,320.1 1199.5,320.1 1199.5,362.1 1197.4,365.1 1195.3,362.1" fill="#8e8e89"/><polygon points="1196.5,320.1 1198.5,320.1 1198.5,362.1 1197.5,363.9 1196.5,362.1" fill="#e3e3dd"/><polygon points="1206.6,322.5 1210.8,322.5 1210.8,365.5 1208.7,368.5 1206.6,365.5" fill="#8e8e89"/><polygon points="1207.8,322.5 1209.8,322.5 1209.8,365.5 1208.8,367.3 1207.8,365.5" fill="#e3e3dd"/><polygon points="1218.7,325 1223.1,325 1223.1,369.2 1220.9,372.2 1218.7,369.2" fill="#8e8e89"/><polygon points="1219.9,325 1222,325 1222,369.2 1221,371 1219.9,369.2" fill="#e3e3dd"/><polygon points="1230,327.4 1234.4,327.4 1234.4,372.7 1232.2,375.7 1230,372.7" fill="#8e8e89"/><polygon points="1231.2,327.4 1233.4,327.4 1233.4,372.7 1232.3,374.5 1231.2,372.7" fill="#e3e3dd"/><polygon points="1241.3,329.8 1245.9,329.8 1245.9,376.2 1243.6,379.2 1241.3,376.2" fill="#8e8e89"/><polygon points="1242.6,329.8 1244.8,329.8 1244.8,376.2 1243.7,378 1242.6,376.2" fill="#e3e3dd"/><polygon points="1256,332.9 1260.8,332.9 1260.8,380.7 1258.4,383.7 1256,380.7" fill="#8e8e89"/><polygon points="1257.4,332.9 1259.6,332.9 1259.6,380.7 1258.5,382.5 1257.4,380.7" fill="#e3e3dd"/><polygon points="1272.6,336.4 1277.4,336.4 1277.4,385.8 1275,388.8 1272.6,385.8" fill="#8e8e89"/><polygon points="1273.9,336.4 1276.3,336.4 1276.3,385.8 1275.1,387.6 1273.9,385.8" fill="#e3e3dd"/><polygon points="1289.9,340.1 1294.9,340.1 1294.9,391.1 1292.4,394.1 1289.9,391.1" fill="#8e8e89"/><polygon points="1291.3,340.1 1293.7,340.1 1293.7,391.1 1292.5,392.9 1291.3,391.1" fill="#e3e3dd"/><polygon points="1308.1,344 1313.3,344 1313.3,396.7 1310.7,399.7 1308.1,396.7" fill="#8e8e89"/><polygon points="1309.6,344 1312.1,344 1312.1,396.7 1310.8,398.5 1309.6,396.7" fill="#e3e3dd"/><polygon points="1328.1,348.2 1333.5,348.2 1333.5,402.8 1330.8,405.8 1328.1,402.8" fill="#8e8e89"/><polygon points="1329.6,348.2 1332.2,348.2 1332.2,402.8 1330.9,404.6 1329.6,402.8" fill="#e3e3dd"/><polygon points="1349.8,352.8 1355.4,352.8 1355.4,409.5 1352.6,412.5 1349.8,409.5" fill="#8e8e89"/><polygon points="1351.4,352.8 1354.1,352.8 1354.1,409.5 1352.7,411.3 1351.4,409.5" fill="#e3e3dd"/><polygon points="1361.3,349.4 1366.7,349.4 1366.7,401.9 1364,404.9 1361.3,401.9" fill="#8e8e89"/><polygon points="1362.8,349.4 1365.4,349.4 1365.4,401.9 1364.1,403.7 1362.8,401.9" fill="#e3e3dd"/><polygon points="1372.5,344.3 1377.7,344.3 1377.7,394.5 1375.1,397.5 1372.5,394.5" fill="#8e8e89"/><polygon points="1374,344.3 1376.5,344.3 1376.5,394.5 1375.2,396.3 1374,394.5" fill="#e3e3dd"/><polygon points="1382,339.9 1387,339.9 1387,388.2 1384.5,391.2 1382,388.2" fill="#8e8e89"/><polygon points="1383.4,339.9 1385.8,339.9 1385.8,388.2 1384.6,390 1383.4,388.2" fill="#e3e3dd"/><polygon points="1391.5,335.5 1396.3,335.5 1396.3,382 1393.9,385 1391.5,382" fill="#8e8e89"/><polygon points="1392.8,335.5 1395.2,335.5 1395.2,382 1394,383.8 1392.8,382" fill="#e3e3dd"/><polygon points="1401,331.1 1405.6,331.1 1405.6,375.7 1403.3,378.7 1401,375.7" fill="#8e8e89"/><polygon points="1402.3,331.1 1404.5,331.1 1404.5,375.7 1403.4,377.5 1402.3,375.7" fill="#e3e3dd"/><polygon points="1409.8,327.1 1414.2,327.1 1414.2,369.9 1412,372.9 1409.8,369.9" fill="#8e8e89"/><polygon points="1411,327.1 1413.2,327.1 1413.2,369.9 1412.1,371.7 1411,369.9" fill="#e3e3dd"/><polygon points="1418.3,323.2 1422.5,323.2 1422.5,364.3 1420.4,367.3 1418.3,364.3" fill="#8e8e89"/><polygon points="1419.5,323.2 1421.5,323.2 1421.5,364.3 1420.5,366.1 1419.5,364.3" fill="#e3e3dd"/><polygon points="1425.6,319.8 1429.8,319.8 1429.8,359.4 1427.7,362.4 1425.6,359.4" fill="#8e8e89"/><polygon points="1426.8,319.8 1428.8,319.8 1428.8,359.4 1427.8,361.2 1426.8,359.4" fill="#e3e3dd"/><polygon points="1433,316.3 1437,316.3 1437,354.6 1435,357.6 1433,354.6" fill="#8e8e89"/><polygon points="1434.1,316.3 1436,316.3 1436,354.6 1435.1,356.4 1434.1,354.6" fill="#e3e3dd"/><polygon points="1439.8,313.2 1443.6,313.2 1443.6,350.1 1441.7,353.1 1439.8,350.1" fill="#8e8e89"/><polygon points="1440.9,313.2 1442.7,313.2 1442.7,350.1 1441.8,351.9 1440.9,350.1" fill="#e3e3dd"/><polygon points="1446.2,310.2 1450,310.2 1450,345.8 1448.1,348.8 1446.2,345.8" fill="#8e8e89"/><polygon points="1447.3,310.2 1449.1,310.2 1449.1,345.8 1448.2,347.6 1447.3,345.8" fill="#e3e3dd"/><polygon points="1452.6,307.3 1456.2,307.3 1456.2,341.6 1454.4,344.6 1452.6,341.6" fill="#8e8e89"/><polygon points="1453.6,307.3 1455.3,307.3 1455.3,341.6 1454.5,343.4 1453.6,341.6" fill="#e3e3dd"/><polygon points="1264,127.2 1395.3,102 1395.3,165 1264,165" fill="#d9744b" stroke="#3b1c0e" stroke-width="0.7"/><path d="M1268 141.7L1395.3 121" stroke="#3b1c0e" stroke-width="0.6"/><path d="M1268 141.7L1268 160" stroke="#3b1c0e" stroke-width="0.5"/><polygon points="1395.3,102 1513,164.4 1513,263.5 1395.3,300" fill="#ff8c5f" stroke="#3b1c0e" stroke-width="0.7"/><path d="M1398.3 103.5L1398.3 160" stroke="#3b1c0e" stroke-width="0.5"/><polygon points="1513,190.6 1521,191.5 1521,259.2 1513,261.5" fill="#ff8c5f" stroke="#3b1c0e" stroke-width="0.5"/><path d="M1517 191L1517 262" stroke="#3b1c0e" stroke-width="0.4"/><polygon points="1401,121.1 1412,126.2 1412,172.2 1401,169.4" fill="#e27a4c" stroke="#3b1c0e" stroke-width="0.4"/><polygon points="1402,124 1411,128.1 1411,170.1 1402,167.7" fill="#3c4048" stroke="#3b1c0e" stroke-width="0.5"/><polygon points="1402.8,145.4 1410.2,148.6 1410.2,168.7 1402.8,166.3" fill="#15171a"/><polygon points="1414.5,127.3 1424.5,131.9 1424.5,175.3 1414.5,172.8" fill="#e27a4c" stroke="#3b1c0e" stroke-width="0.4"/><polygon points="1415.5,130.1 1423.5,133.7 1423.5,173.3 1415.5,171.2" fill="#3c4048" stroke="#3b1c0e" stroke-width="0.5"/><polygon points="1416.3,150.2 1422.7,153.1 1422.7,172 1416.3,169.9" fill="#15171a"/><polygon points="1426.5,132.9 1435.5,137 1435.5,178.1 1426.5,175.8" fill="#e27a4c" stroke="#3b1c0e" stroke-width="0.4"/><polygon points="1427.5,135.5 1434.5,138.6 1434.5,176.1 1427.5,174.3" fill="#3c4048" stroke="#3b1c0e" stroke-width="0.5"/><polygon points="1428.3,154.5 1433.7,157 1433.7,174.9 1428.3,173" fill="#15171a"/><polygon points="1402,173.6 1406,174.5 1406,205 1402,204.7" fill="#2b2f33" stroke="#3b1c0e" stroke-width="0.4"/><polygon points="1415.5,176.7 1424,178.7 1424,206.8 1415.5,206" fill="#3c4048" stroke="#3b1c0e" stroke-width="0.4"/><polygon points="1431,180.3 1434.5,181.1 1434.5,207.8 1431,207.5" fill="#2b2f33" stroke="#3b1c0e" stroke-width="0.4"/><path d="M1410 173.6L1410 295.4" stroke="#3b1c0e" stroke-width="0.4"/><path d="M1428 177.9L1428 289.9" stroke="#3b1c0e" stroke-width="0.4"/><polygon points="1440,133 1497,161.1 1497,214.5 1440,209.2" fill="#3b4048" stroke="#3b1c0e" stroke-width="0.4"/><polygon points="1446.6,134.7 1449.3,136 1449.3,210 1446.6,209.8" fill="#e9804f" stroke="#3b1c0e" stroke-width="0.35"/><polygon points="1453.8,138.3 1456.3,139.6 1456.3,210.7 1453.8,210.5" fill="#e9804f" stroke="#3b1c0e" stroke-width="0.35"/><polygon points="1460.6,141.7 1463,142.9 1463,211.3 1460.6,211.1" fill="#e9804f" stroke="#3b1c0e" stroke-width="0.35"/><polygon points="1466.8,144.8 1469,145.9 1469,211.9 1466.8,211.7" fill="#e9804f" stroke="#3b1c0e" stroke-width="0.35"/><polygon points="1472.6,147.7 1474.7,148.8 1474.7,212.4 1472.6,212.2" fill="#e9804f" stroke="#3b1c0e" stroke-width="0.35"/><polygon points="1478,150.4 1480,151.4 1480,212.9 1478,212.7" fill="#e9804f" stroke="#3b1c0e" stroke-width="0.35"/><polygon points="1483,152.9 1484.8,153.8 1484.8,213.4 1483,213.2" fill="#e9804f" stroke="#3b1c0e" stroke-width="0.35"/><polygon points="1487.6,155.2 1489.2,156 1489.2,213.8 1487.6,213.6" fill="#e9804f" stroke="#3b1c0e" stroke-width="0.35"/><polygon points="1491.8,157.3 1493.3,158.1 1493.3,214.1 1491.8,214" fill="#e9804f" stroke="#3b1c0e" stroke-width="0.35"/><polygon points="1449.5,167.7 1453.5,169 1453.5,188.6 1449.5,187.7" fill="#1c1e22"/><path d="M1451.5 169.2L1451.5 186.2" stroke="#d8b9a8" stroke-width="0.5"/><polygon points="1456.5,170 1460.3,171.2 1460.3,190.1 1456.5,189.3" fill="#1c1e22"/><path d="M1458.4 171.5L1458.4 187.8" stroke="#d8b9a8" stroke-width="0.5"/><polygon points="1463.2,172.2 1466.5,173.3 1466.5,191.4 1463.2,190.7" fill="#1c1e22"/><path d="M1464.8 173.6L1464.8 189.3" stroke="#d8b9a8" stroke-width="0.5"/><polygon points="1469.2,174.2 1472.3,175.2 1472.3,192.7 1469.2,192" fill="#1c1e22"/><path d="M1470.8 175.5L1470.8 190.6" stroke="#d8b9a8" stroke-width="0.5"/><polygon points="1474.9,176 1477.7,176.9 1477.7,193.8 1474.9,193.2" fill="#1c1e22"/><path d="M1476.3 177.3L1476.3 191.9" stroke="#d8b9a8" stroke-width="0.5"/><polygon points="1480.2,177.7 1482.7,178.6 1482.7,194.9 1480.2,194.4" fill="#1c1e22"/><path d="M1481.4 179L1481.4 193.1" stroke="#d8b9a8" stroke-width="0.5"/><polygon points="1485,179.3 1487.3,180.1 1487.3,195.9 1485,195.4" fill="#1c1e22"/><path d="M1486.2 180.5L1486.2 194.2" stroke="#d8b9a8" stroke-width="0.5"/><polygon points="1489.5,180.8 1491.5,181.4 1491.5,196.8 1489.5,196.4" fill="#1c1e22"/><path d="M1490.5 182L1490.5 195.2" stroke="#d8b9a8" stroke-width="0.5"/><path d="M1498.2 157.7L1498.2 265.9" stroke="#3b1c0e" stroke-width="0.5"/><polygon points="1500.5,178.8 1503.3,179.9 1503.3,204.8 1500.5,204.3" fill="#33292a" stroke="#3b1c0e" stroke-width="0.3"/><polygon points="1500.5,208.7 1503.3,209.1 1503.3,214.5 1500.5,214.3" fill="#33292a"/><polygon points="1505.3,180.6 1507.8,181.5 1507.8,205.6 1505.3,205.1" fill="#33292a" stroke="#3b1c0e" stroke-width="0.3"/><polygon points="1505.3,209.4 1507.8,209.8 1507.8,215 1505.3,214.7" fill="#33292a"/><polygon points="1509.3,182.1 1511.6,182.9 1511.6,206.2 1509.3,205.8" fill="#33292a" stroke="#3b1c0e" stroke-width="0.3"/><polygon points="1509.3,210 1511.6,210.3 1511.6,215.3 1509.3,215.1" fill="#33292a"/><polygon points="1402,213.4 1405,213.6 1405,249.1 1402,249.3" fill="#24272b" stroke="#3b1c0e" stroke-width="0.3"/><polygon points="1414.5,214.1 1420.5,214.5 1420.5,247.5 1414.5,248.1" fill="#24272b" stroke="#3b1c0e" stroke-width="0.3"/><polygon points="1415.5,218.7 1419.5,219 1419.5,224.3 1415.5,224.2" fill="#c5a79c"/><polygon points="1416.1,227.9 1418.9,227.9 1418.9,241.3 1416.1,241.7" fill="#a88e88"/><polygon points="1424.5,214.7 1429.5,215 1429.5,246.7 1424.5,247.2" fill="#24272b" stroke="#3b1c0e" stroke-width="0.3"/><polygon points="1425.5,219.1 1428.5,219.3 1428.5,224.4 1425.5,224.4" fill="#c5a79c"/><polygon points="1426.1,227.9 1427.9,227.9 1427.9,240.7 1426.1,241" fill="#a88e88"/><polygon points="1440,215.7 1446,216 1446,245.1 1440,245.6" fill="#30343b" stroke="#3b1c0e" stroke-width="0.3"/><polygon points="1449,216.2 1451,216.3 1451,244.6 1449,244.8" fill="#30343b" stroke="#3b1c0e" stroke-width="0.3"/><polygon points="1455.5,216.6 1459,216.8 1459,243.8 1455.5,244.1" fill="#30343b" stroke="#3b1c0e" stroke-width="0.3"/><polygon points="1462.5,217 1464.5,217.1 1464.5,243.2 1462.5,243.4" fill="#30343b" stroke="#3b1c0e" stroke-width="0.3"/><polygon points="1468,217.3 1471,217.5 1471,242.6 1468,242.9" fill="#30343b" stroke="#3b1c0e" stroke-width="0.3"/><polygon points="1474.5,217.7 1476.3,217.8 1476.3,242.1 1474.5,242.3" fill="#30343b" stroke="#3b1c0e" stroke-width="0.3"/><polygon points="1479.5,218 1482,218.1 1482,241.5 1479.5,241.8" fill="#30343b" stroke="#3b1c0e" stroke-width="0.3"/><polygon points="1485,218.3 1486.6,218.4 1486.6,241.1 1485,241.2" fill="#30343b" stroke="#3b1c0e" stroke-width="0.3"/><polygon points="1489.5,218.6 1491.6,218.7 1491.6,240.6 1489.5,240.8" fill="#30343b" stroke="#3b1c0e" stroke-width="0.3"/><polygon points="1494.5,218.9 1496,219 1496,240.2 1494.5,240.3" fill="#30343b" stroke="#3b1c0e" stroke-width="0.3"/><polygon points="1500.5,219.2 1502.8,219.4 1502.8,239.5 1500.5,239.7" fill="#30343b" stroke="#3b1c0e" stroke-width="0.3"/><polygon points="1505.3,219.5 1507.3,219.7 1507.3,239.1 1505.3,239.3" fill="#30343b" stroke="#3b1c0e" stroke-width="0.3"/><polygon points="1509.3,219.8 1511.3,219.9 1511.3,238.7 1509.3,238.9" fill="#30343b" stroke="#3b1c0e" stroke-width="0.3"/><polygon points="1402,261 1405,260.6 1405,296 1402,297" fill="#24272b" stroke="#3b1c0e" stroke-width="0.3"/><polygon points="1414.5,259.1 1420.5,258.3 1420.5,291.3 1414.5,293.1" fill="#24272b" stroke="#3b1c0e" stroke-width="0.3"/><polygon points="1424.5,257.7 1429.5,256.9 1429.5,288.6 1424.5,290.1" fill="#24272b" stroke="#3b1c0e" stroke-width="0.3"/><polygon points="1440,255.4 1446,254.5 1446,283.5 1440,285.3" fill="#30343b" stroke="#3b1c0e" stroke-width="0.3"/><polygon points="1449,254 1451,253.7 1451,282 1449,282.6" fill="#30343b" stroke="#3b1c0e" stroke-width="0.3"/><polygon points="1455.5,253.1 1459,252.5 1459,279.5 1455.5,280.6" fill="#30343b" stroke="#3b1c0e" stroke-width="0.3"/><polygon points="1479.5,249.5 1482,249.1 1482,272.5 1479.5,273.3" fill="#30343b" stroke="#3b1c0e" stroke-width="0.3"/><polygon points="1485,248.7 1486.6,248.4 1486.6,271.1 1485,271.6" fill="#30343b" stroke="#3b1c0e" stroke-width="0.3"/><polygon points="1489.5,248 1491.6,247.7 1491.6,269.6 1489.5,270.2" fill="#30343b" stroke="#3b1c0e" stroke-width="0.3"/><polygon points="1494.5,247.3 1496,247 1496,268.2 1494.5,268.7" fill="#30343b" stroke="#3b1c0e" stroke-width="0.3"/><polygon points="1500.5,246.4 1502.8,246 1502.8,266.2 1500.5,266.9" fill="#30343b" stroke="#3b1c0e" stroke-width="0.3"/><polygon points="1505.3,245.7 1507.3,245.4 1507.3,264.8 1505.3,265.4" fill="#30343b" stroke="#3b1c0e" stroke-width="0.3"/><polygon points="1509.3,245.1 1511.3,244.8 1511.3,263.6 1509.3,264.2" fill="#30343b" stroke="#3b1c0e" stroke-width="0.3"/><path d="M1437 214.7L1437 285.4" stroke="#a85030" stroke-width="0.5"/><path d="M1447.5 215.3L1447.5 282.3" stroke="#a85030" stroke-width="0.5"/><path d="M1453 215.7L1453 280.6" stroke="#a85030" stroke-width="0.5"/><path d="M1461 216.2L1461 278.2" stroke="#a85030" stroke-width="0.5"/><path d="M1466.5 216.5L1466.5 276.6" stroke="#a85030" stroke-width="0.5"/><path d="M1473 216.9L1473 274.6" stroke="#a85030" stroke-width="0.5"/><path d="M1478 217.3L1478 273.1" stroke="#a85030" stroke-width="0.5"/><path d="M1483.5 217.6L1483.5 271.4" stroke="#a85030" stroke-width="0.5"/><path d="M1488 217.9L1488 270.1" stroke="#a85030" stroke-width="0.5"/><path d="M1493 218.2L1493 268.6" stroke="#a85030" stroke-width="0.5"/><polygon points="1459,249.6 1476,247.4 1476,300 1459,306" fill="#2a2c2e"/><polygon points="1462.3,252 1474,251.3 1474,279 1462.3,280" fill="#33373a"/><polygon points="1462,278.5 1474.7,277.3 1474.7,294.5 1462,295.5" fill="#e8e8e0" stroke="#666" stroke-width="0.4"/><path d="M1471.5 278L1471.5 294.6" stroke="#9a9a94" stroke-width="0.6"/><polygon points="1460,295.5 1477.3,293.7 1477.3,297.5 1460,299.3" fill="#dcdcd5" stroke="#777" stroke-width="0.3"/><polygon points="1476,247.4 1521,241.5 1521,262 1476,272" fill="#ff8c5f"/><path d="M1480 249.4L1480 269.6" stroke="#3a2018" stroke-width="0.9"/><path d="M1484.5 248.8L1484.5 268.5" stroke="#3a2018" stroke-width="0.9"/><path d="M1488.6 248.1L1488.6 267.6" stroke="#3a2018" stroke-width="0.9"/><path d="M1492.5 247.6L1492.5 266.7" stroke="#3a2018" stroke-width="0.9"/><path d="M1496 247L1496 265.9" stroke="#3a2018" stroke-width="0.9"/><path d="M1499.6 246.5L1499.6 265.1" stroke="#3a2018" stroke-width="0.9"/><path d="M1503 246L1503 264.3" stroke="#3a2018" stroke-width="0.9"/><path d="M1506 245.6L1506 263.6" stroke="#3a2018" stroke-width="0.9"/><path d="M1509 245.1L1509 262.9" stroke="#3a2018" stroke-width="0.9"/><path d="M1512 244.7L1512 262.2" stroke="#3a2018" stroke-width="0.9"/><polygon points="1475.7,269.8 1520.6,259.4 1520.6,279.2 1475.7,293.8" fill="#35393b" stroke="#1c1e1f" stroke-width="0.5"/><polygon points="1494,267 1499,259.5 1503,258 1510,261 1519.5,258.2 1519.5,262 1494,268.5" fill="#707273"/><polygon points="1492.3,269.3 1494.4,268.8 1494.4,272 1492.3,272.5" fill="#101112"/><polygon points="1355.5,140.8 1398.5,154.3 1398.5,296.2 1355.5,309" fill="#ff8c5f" stroke="#3b1c0e" stroke-width="0.7"/><path d="M1357.8 141.8L1357.8 308.5" stroke="#3b1c0e" stroke-width="0.5"/><path d="M1355.5 164.8L1398.5 174.5" stroke="#3b1c0e" stroke-width="0.5"/><polygon points="1396.2,154 1398.5,155.6 1398.5,172 1396.2,171" fill="#e67e50" stroke="#3b1c0e" stroke-width="0.4"/><polygon points="1355.5,202.6 1521,217.3 1521,220.4 1355.5,210.4" fill="#fbfbf2" stroke="#8a8a84" stroke-width="0.4"/><polygon points="1355.5,254.2 1459,244 1459,249.1 1355.5,262.4" fill="#fbfbf2" stroke="#8a8a84" stroke-width="0.4"/><polygon points="1476,242.3 1521,237.9 1521,240.7 1476,246.4" fill="#fbfbf2" stroke="#8a8a84" stroke-width="0.4"/><polygon points="1382,250.8 1424,246.4 1424.5,253.8 1383,259.2" fill="#2b2e30" stroke="#111" stroke-width="0.5"/><polygon points="1382,250.8 1424,246.4 1424,248 1382,252.4" fill="#3f4346"/><polygon points="1491.5,240.6 1512,238.8 1512,242.6 1491.5,244.7" fill="#2b2e30" stroke="#111" stroke-width="0.4"/><polygon points="1355.5,309 1459,279.2 1459,310.5 1355.5,355.4" fill="#373b3d" stroke="#17191a" stroke-width="0.6"/><path d="M1357.5 315.6L1458 283.7" stroke="#50555a" stroke-width="0.35"/><path d="M1357.5 322.3L1458 288.1" stroke="#50555a" stroke-width="0.35"/><path d="M1357.5 328.9L1458 292.6" stroke="#50555a" stroke-width="0.35"/><path d="M1357.5 335.5L1458 297.1" stroke="#50555a" stroke-width="0.35"/><path d="M1357.5 342.1L1458 301.6" stroke="#50555a" stroke-width="0.35"/><path d="M1357.5 348.8L1458 306" stroke="#50555a" stroke-width="0.35"/><path d="M1366.2 312.3L1366.2 318.7" stroke="#50555a" stroke-width="0.35"/><path d="M1366.2 325.1L1366.2 331.5" stroke="#50555a" stroke-width="0.35"/><path d="M1366.2 337.9L1366.2 344.3" stroke="#50555a" stroke-width="0.35"/><path d="M1373.8 303.7L1373.8 310" stroke="#50555a" stroke-width="0.35"/><path d="M1373.8 316.2L1373.8 322.5" stroke="#50555a" stroke-width="0.35"/><path d="M1373.8 328.7L1373.8 335" stroke="#50555a" stroke-width="0.35"/><path d="M1373.8 341.2L1373.8 347.5" stroke="#50555a" stroke-width="0.35"/><path d="M1381.2 307.7L1381.2 313.8" stroke="#50555a" stroke-width="0.35"/><path d="M1381.2 319.9L1381.2 326" stroke="#50555a" stroke-width="0.35"/><path d="M1381.2 332L1381.2 338.1" stroke="#50555a" stroke-width="0.35"/><path d="M1388.6 299.5L1388.6 305.4" stroke="#50555a" stroke-width="0.35"/><path d="M1388.6 311.4L1388.6 317.3" stroke="#50555a" stroke-width="0.35"/><path d="M1388.6 323.2L1388.6 329.2" stroke="#50555a" stroke-width="0.35"/><path d="M1388.6 335.1L1388.6 341.1" stroke="#50555a" stroke-width="0.35"/><path d="M1395.7 303.2L1395.7 309" stroke="#50555a" stroke-width="0.35"/><path d="M1395.7 314.8L1395.7 320.6" stroke="#50555a" stroke-width="0.35"/><path d="M1395.7 326.4L1395.7 332.2" stroke="#50555a" stroke-width="0.35"/><path d="M1402.7 295.4L1402.7 301.1" stroke="#50555a" stroke-width="0.35"/><path d="M1402.7 306.7L1402.7 312.3" stroke="#50555a" stroke-width="0.35"/><path d="M1402.7 318L1402.7 323.6" stroke="#50555a" stroke-width="0.35"/><path d="M1402.7 329.3L1402.7 334.9" stroke="#50555a" stroke-width="0.35"/><path d="M1409.5 298.9L1409.5 304.4" stroke="#50555a" stroke-width="0.35"/><path d="M1409.5 310L1409.5 315.5" stroke="#50555a" stroke-width="0.35"/><path d="M1409.5 321L1409.5 326.5" stroke="#50555a" stroke-width="0.35"/><path d="M1416.2 291.5L1416.2 296.9" stroke="#50555a" stroke-width="0.35"/><path d="M1416.2 302.3L1416.2 307.6" stroke="#50555a" stroke-width="0.35"/><path d="M1416.2 313L1416.2 318.4" stroke="#50555a" stroke-width="0.35"/><path d="M1416.2 323.7L1416.2 329.1" stroke="#50555a" stroke-width="0.35"/><path d="M1422.6 294.9L1422.6 300.1" stroke="#50555a" stroke-width="0.35"/><path d="M1422.6 305.4L1422.6 310.6" stroke="#50555a" stroke-width="0.35"/><path d="M1422.6 315.8L1422.6 321.1" stroke="#50555a" stroke-width="0.35"/><path d="M1428.8 287.9L1428.8 293" stroke="#50555a" stroke-width="0.35"/><path d="M1428.8 298.1L1428.8 303.2" stroke="#50555a" stroke-width="0.35"/><path d="M1428.8 308.3L1428.8 313.4" stroke="#50555a" stroke-width="0.35"/><path d="M1428.8 318.5L1428.8 323.6" stroke="#50555a" stroke-width="0.35"/><path d="M1434.8 291.2L1434.8 296.1" stroke="#50555a" stroke-width="0.35"/><path d="M1434.8 301.1L1434.8 306.1" stroke="#50555a" stroke-width="0.35"/><path d="M1434.8 311.1L1434.8 316" stroke="#50555a" stroke-width="0.35"/><path d="M1440.4 284.6L1440.4 289.4" stroke="#50555a" stroke-width="0.35"/><path d="M1440.4 294.3L1440.4 299.1" stroke="#50555a" stroke-width="0.35"/><path d="M1440.4 304L1440.4 308.8" stroke="#50555a" stroke-width="0.35"/><path d="M1440.4 313.7L1440.4 318.6" stroke="#50555a" stroke-width="0.35"/><path d="M1445.7 287.8L1445.7 292.5" stroke="#50555a" stroke-width="0.35"/><path d="M1445.7 297.3L1445.7 302" stroke="#50555a" stroke-width="0.35"/><path d="M1445.7 306.8L1445.7 311.5" stroke="#50555a" stroke-width="0.35"/><path d="M1450.6 281.6L1450.6 286.3" stroke="#50555a" stroke-width="0.35"/><path d="M1450.6 290.9L1450.6 295.6" stroke="#50555a" stroke-width="0.35"/><path d="M1450.6 300.2L1450.6 304.8" stroke="#50555a" stroke-width="0.35"/><path d="M1450.6 309.5L1450.6 314.1" stroke="#50555a" stroke-width="0.35"/><path d="M1454.9 284.9L1454.9 289.5" stroke="#50555a" stroke-width="0.35"/><path d="M1454.9 294.1L1454.9 298.6" stroke="#50555a" stroke-width="0.35"/><path d="M1454.9 303.2L1454.9 307.7" stroke="#50555a" stroke-width="0.35"/><polygon points="1388,316.8 1402.6,298 1408.9,287.6 1422.5,288.6 1422.5,299 1415,301 1404.7,318.9" fill="#8a8c8d"/><polygon points="1402.6,298 1408.9,287.6 1422.5,288.6 1422.5,299 1415,301 1410.5,302" fill="#5c5e5f"/><path d="M1389 316.8L1404.7 318.9" stroke="#c8c8c8" stroke-width="0.5"/><path d="M1391.1 314.1L1405.9 316.4" stroke="#c8c8c8" stroke-width="0.5"/><path d="M1393.2 311.4L1407.1 313.9" stroke="#c8c8c8" stroke-width="0.5"/><path d="M1395.3 308.7L1408.3 311.4" stroke="#c8c8c8" stroke-width="0.5"/><path d="M1397.3 306.1L1409.4 309" stroke="#c8c8c8" stroke-width="0.5"/><path d="M1399.4 303.4L1410.6 306.5" stroke="#c8c8c8" stroke-width="0.5"/><path d="M1401.5 300.7L1411.8 304" stroke="#c8c8c8" stroke-width="0.5"/><polygon points="1375,312.6 1379.2,311.4 1379.2,317.2 1375,318.4" fill="#0e0f10"/><polygon points="1055.3,183.1 1355.5,140.8 1355.5,309 1055.3,268.6" fill="#2c3132" stroke="#3b1c0e" stroke-width="0.6"/><polygon points="1067.4,194.4 1072.2,194 1072.2,213.2 1067.4,213.4" fill="#15171a"/><polygon points="1067.7,196 1071.9,195.6 1071.9,198 1067.7,198.3" fill="#7d7f82"/><polygon points="1068.1,201.2 1069.3,201.1 1069.3,210.2 1068.1,210.2" fill="#9c847c"/><polygon points="1070.6,201 1071.7,201 1071.7,210 1070.6,210.1" fill="#9c847c"/><polygon points="1067.4,221.4 1072.2,221.3 1072.2,241 1067.4,240.8" fill="#15171a"/><polygon points="1067.7,222.8 1071.9,222.7 1071.9,225.3 1067.7,225.3" fill="#7d7f82"/><polygon points="1068.1,227.9 1069.3,227.9 1069.3,238.6 1068.1,238.5" fill="#9c847c"/><polygon points="1070.6,227.9 1071.7,227.9 1071.7,238.6 1070.6,238.6" fill="#9c847c"/><polygon points="1067.4,249 1072.2,249.4 1072.2,270.4 1067.4,269.7" fill="#15171a"/><polygon points="1067.7,250.5 1071.9,250.9 1071.9,253.6 1067.7,253.3" fill="#7d7f82"/><polygon points="1068.1,256 1069.3,256.1 1069.3,267.5 1068.1,267.3" fill="#9c847c"/><polygon points="1070.6,256.2 1071.7,256.3 1071.7,267.8 1070.6,267.7" fill="#9c847c"/><polygon points="1081.7,193 1087.2,192.4 1087.2,212.5 1081.7,212.8" fill="#15171a"/><polygon points="1082.1,194.7 1087,194.2 1087,196.6 1082.1,197.1" fill="#7d7f82"/><polygon points="1082.6,200.1 1084,200 1084,209.4 1082.6,209.5" fill="#9c847c"/><polygon points="1085.5,199.9 1086.7,199.8 1086.7,209.3 1085.5,209.3" fill="#9c847c"/><polygon points="1081.7,221.1 1087.2,221 1087.2,241.7 1081.7,241.4" fill="#15171a"/><polygon points="1082.1,222.6 1087,222.5 1087,225.2 1082.1,225.2" fill="#7d7f82"/><polygon points="1082.6,227.9 1084,227.9 1084,239.1 1082.6,239" fill="#9c847c"/><polygon points="1085.5,227.9 1086.7,227.9 1086.7,239.2 1085.5,239.1" fill="#9c847c"/><polygon points="1081.7,250 1087.2,250.4 1087.2,272.4 1081.7,271.6" fill="#15171a"/><polygon points="1082.1,251.6 1087,252 1087,254.8 1082.1,254.4" fill="#7d7f82"/><polygon points="1082.6,257.3 1084,257.4 1084,269.3 1082.6,269.2" fill="#9c847c"/><polygon points="1085.5,257.6 1086.7,257.7 1086.7,269.7 1085.5,269.5" fill="#9c847c"/><polygon points="1106.3,190.5 1112.7,189.9 1112.7,211.5 1106.3,211.7" fill="#15171a"/><polygon points="1106.8,192.3 1112.4,191.8 1112.4,194.4 1106.8,194.9" fill="#7d7f82"/><polygon points="1107.4,198.1 1108.9,198 1108.9,208.1 1107.4,208.2" fill="#9c847c"/><polygon points="1110.7,197.9 1112.1,197.8 1112.1,208 1110.7,208" fill="#9c847c"/><polygon points="1106.3,220.7 1112.7,220.6 1112.7,242.8 1106.3,242.5" fill="#15171a"/><polygon points="1106.8,222.3 1112.4,222.2 1112.4,225.1 1106.8,225.1" fill="#7d7f82"/><polygon points="1107.4,228 1108.9,228 1108.9,240 1107.4,239.9" fill="#9c847c"/><polygon points="1110.7,228 1112.1,228 1112.1,240.1 1110.7,240.1" fill="#9c847c"/><polygon points="1106.3,251.7 1112.7,252.2 1112.7,275.7 1106.3,274.9" fill="#15171a"/><polygon points="1106.8,253.4 1112.4,253.8 1112.4,256.9 1106.8,256.5" fill="#7d7f82"/><polygon points="1107.4,259.5 1108.9,259.7 1108.9,272.5 1107.4,272.3" fill="#9c847c"/><polygon points="1110.7,259.8 1112.1,260 1112.1,272.9 1110.7,272.7" fill="#9c847c"/><polygon points="1121.8,189 1128.7,188.3 1128.7,210.8 1121.8,211.1" fill="#15171a"/><polygon points="1122.3,190.8 1128.3,190.3 1128.3,193 1122.3,193.5" fill="#7d7f82"/><polygon points="1122.9,196.9 1124.6,196.8 1124.6,207.3 1122.9,207.4" fill="#9c847c"/><polygon points="1126.5,196.6 1128,196.5 1128,207.2 1126.5,207.2" fill="#9c847c"/><polygon points="1121.8,220.5 1128.7,220.3 1128.7,243.5 1121.8,243.2" fill="#15171a"/><polygon points="1122.3,222.1 1128.3,222 1128.3,225 1122.3,225.1" fill="#7d7f82"/><polygon points="1122.9,228 1124.6,228 1124.6,240.6 1122.9,240.5" fill="#9c847c"/><polygon points="1126.5,228 1128,228.1 1128,240.7 1126.5,240.6" fill="#9c847c"/><polygon points="1121.8,252.8 1128.7,253.3 1128.7,277.9 1121.8,277" fill="#15171a"/><polygon points="1122.3,254.6 1128.3,255 1128.3,258.2 1122.3,257.7" fill="#7d7f82"/><polygon points="1122.9,261 1124.6,261.1 1124.6,274.4 1122.9,274.2" fill="#9c847c"/><polygon points="1126.5,261.3 1128,261.4 1128,274.9 1126.5,274.7" fill="#9c847c"/><polygon points="1133.9,187.8 1141.4,187 1141.4,210.3 1133.9,210.6" fill="#15171a"/><polygon points="1134.4,189.7 1141.1,189 1141.1,191.9 1134.4,192.4" fill="#7d7f82"/><polygon points="1135.1,195.9 1137,195.8 1137,206.7 1135.1,206.8" fill="#9c847c"/><polygon points="1139,195.6 1140.7,195.5 1140.7,206.5 1139,206.6" fill="#9c847c"/><polygon points="1133.9,220.3 1141.4,220.1 1141.4,244 1133.9,243.7" fill="#15171a"/><polygon points="1134.4,221.9 1141.1,221.8 1141.1,225 1134.4,225" fill="#7d7f82"/><polygon points="1135.1,228.1 1137,228.1 1137,241 1135.1,240.9" fill="#9c847c"/><polygon points="1139,228.1 1140.7,228.1 1140.7,241.2 1139,241.1" fill="#9c847c"/><polygon points="1133.9,253.6 1141.4,254.2 1141.4,279.6 1133.9,278.6" fill="#15171a"/><polygon points="1134.4,255.5 1141.1,255.9 1141.1,259.3 1134.4,258.7" fill="#7d7f82"/><polygon points="1135.1,262.1 1137,262.2 1137,276 1135.1,275.8" fill="#9c847c"/><polygon points="1139,262.4 1140.7,262.6 1140.7,276.5 1139,276.2" fill="#9c847c"/><polygon points="1146.8,186.5 1155,185.6 1155,209.7 1146.8,210.1" fill="#15171a"/><polygon points="1147.3,188.5 1154.6,187.8 1154.6,190.7 1147.3,191.3" fill="#7d7f82"/><polygon points="1148.1,194.9 1150.1,194.7 1150.1,206 1148.1,206.1" fill="#9c847c"/><polygon points="1152.4,194.6 1154.2,194.4 1154.2,205.8 1152.4,205.9" fill="#9c847c"/><polygon points="1146.8,220 1155,219.9 1155,244.6 1146.8,244.3" fill="#15171a"/><polygon points="1147.3,221.8 1154.6,221.7 1154.6,224.9 1147.3,224.9" fill="#7d7f82"/><polygon points="1148.1,228.1 1150.1,228.1 1150.1,241.5 1148.1,241.4" fill="#9c847c"/><polygon points="1152.4,228.1 1154.2,228.1 1154.2,241.6 1152.4,241.6" fill="#9c847c"/><polygon points="1146.8,254.5 1155,255.1 1155,281.4 1146.8,280.3" fill="#15171a"/><polygon points="1147.3,256.4 1154.6,256.9 1154.6,260.4 1147.3,259.8" fill="#7d7f82"/><polygon points="1148.1,263.2 1150.1,263.4 1150.1,277.6 1148.1,277.4" fill="#9c847c"/><polygon points="1152.4,263.6 1154.2,263.8 1154.2,278.1 1152.4,277.9" fill="#9c847c"/><polygon points="1160.9,185.1 1169.6,184.2 1169.6,209.1 1160.9,209.5" fill="#15171a"/><polygon points="1161.5,187.1 1169.2,186.3 1169.2,189.4 1161.5,190.1" fill="#7e8184"/><polygon points="1162.3,193.8 1164.5,193.6 1164.5,205.3 1162.3,205.4" fill="#9e867e"/><polygon points="1166.8,193.4 1168.8,193.3 1168.8,205.1 1166.8,205.2" fill="#9e867e"/><polygon points="1160.9,219.8 1169.6,219.7 1169.6,245.2 1160.9,244.9" fill="#15171a"/><polygon points="1161.5,221.6 1169.2,221.5 1169.2,224.9 1161.5,224.9" fill="#818284"/><polygon points="1162.3,228.2 1164.5,228.2 1164.5,242 1162.3,241.9" fill="#9e867e"/><polygon points="1166.8,228.2 1168.8,228.2 1168.8,242.2 1166.8,242.1" fill="#9e867e"/><polygon points="1160.9,255.5 1169.6,256.1 1169.6,283.3 1160.9,282.2" fill="#15171a"/><polygon points="1161.5,257.4 1169.2,258 1169.2,261.6 1161.5,261" fill="#818284"/><polygon points="1162.3,264.5 1164.5,264.7 1164.5,279.4 1162.3,279.2" fill="#9e867e"/><polygon points="1166.8,264.9 1168.8,265.1 1168.8,280 1166.8,279.7" fill="#9e867e"/><polygon points="1175.4,183.6 1179.8,183.2 1179.8,208.7 1175.4,208.9" fill="#15171a"/><polygon points="1175.7,185.7 1179.6,185.3 1179.6,188.6 1175.7,188.9" fill="#818487"/><polygon points="1176.1,192.7 1177.2,192.6 1177.2,204.6 1176.1,204.7" fill="#a28981"/><polygon points="1178.4,192.5 1179.4,192.4 1179.4,204.5 1178.4,204.6" fill="#a28981"/><polygon points="1175.4,219.6 1179.8,219.5 1179.8,245.7 1175.4,245.5" fill="#15171a"/><polygon points="1175.7,221.4 1179.6,221.3 1179.6,224.9 1175.7,224.9" fill="#888889"/><polygon points="1176.1,228.2 1177.2,228.2 1177.2,242.5 1176.1,242.4" fill="#a28981"/><polygon points="1178.4,228.2 1179.4,228.2 1179.4,242.6 1178.4,242.5" fill="#a28981"/><polygon points="1175.4,256.5 1179.8,256.8 1179.8,284.7 1175.4,284.1" fill="#15171a"/><polygon points="1175.7,258.4 1179.6,258.7 1179.6,262.5 1175.7,262.2" fill="#888889"/><polygon points="1176.1,265.8 1177.2,265.9 1177.2,281 1176.1,280.9" fill="#a28981"/><polygon points="1178.4,266 1179.4,266.1 1179.4,281.3 1178.4,281.2" fill="#a28981"/><polygon points="1189.5,182.2 1201.9,180.9 1201.9,207.8 1189.5,208.3" fill="#15171a"/><polygon points="1190.3,184.2 1201.3,183.2 1201.3,186.8 1190.3,187.7" fill="#83878b"/><polygon points="1191.3,191.5 1194.7,191.2 1194.7,203.7 1191.3,203.9" fill="#a68c84"/><polygon points="1197.8,191 1200.9,190.7 1200.9,203.4 1197.8,203.6" fill="#a68c84"/><polygon points="1189.5,219.3 1201.9,219.1 1201.9,246.7 1189.5,246.1" fill="#15171a"/><polygon points="1190.3,221.1 1201.3,221 1201.3,224.9 1190.3,224.9" fill="#8e8c8d"/><polygon points="1191.3,228.3 1194.7,228.3 1194.7,243.1 1191.3,243" fill="#a68c84"/><polygon points="1197.8,228.3 1200.9,228.3 1200.9,243.3 1197.8,243.2" fill="#a68c84"/><polygon points="1189.5,257.5 1201.9,258.3 1201.9,287.6 1189.5,286" fill="#15171a"/><polygon points="1190.3,259.5 1201.3,260.3 1201.3,264.4 1190.3,263.5" fill="#8e8c8d"/><polygon points="1191.3,267.1 1194.7,267.4 1194.7,283.2 1191.3,282.8" fill="#a68c84"/><polygon points="1197.8,267.7 1200.9,268 1200.9,284 1197.8,283.6" fill="#a68c84"/><polygon points="1209.2,180.2 1219.5,179.2 1219.5,207 1209.2,207.5" fill="#15171a"/><polygon points="1209.9,182.3 1219,181.4 1219,185.4 1209.9,186.1" fill="#878c8f"/><polygon points="1210.7,190 1213.6,189.7 1213.6,202.8 1210.7,202.9" fill="#ab9188"/><polygon points="1216.1,189.5 1218.8,189.3 1218.8,202.5 1216.1,202.6" fill="#ab9188"/><polygon points="1209.2,219 1219.5,218.8 1219.5,247.4 1209.2,247" fill="#15171a"/><polygon points="1209.9,220.9 1219,220.7 1219,224.9 1209.9,224.9" fill="#989493"/><polygon points="1210.7,228.3 1213.6,228.3 1213.6,243.8 1210.7,243.7" fill="#ab9188"/><polygon points="1216.1,228.3 1218.8,228.3 1218.8,244 1216.1,243.9" fill="#ab9188"/><polygon points="1209.2,258.8 1219.5,259.5 1219.5,290 1209.2,288.6" fill="#15171a"/><polygon points="1209.9,260.9 1219,261.5 1219,265.9 1209.9,265.2" fill="#989493"/><polygon points="1210.7,268.9 1213.6,269.2 1213.6,285.6 1210.7,285.2" fill="#ab9188"/><polygon points="1216.1,269.4 1218.8,269.6 1218.8,286.3 1216.1,285.9" fill="#ab9188"/><polygon points="1227,178.4 1239.9,177.1 1239.9,206.2 1227,206.7" fill="#15171a"/><polygon points="1227.9,180.5 1239.3,179.4 1239.3,183.7 1227.9,184.7" fill="#8a9094"/><polygon points="1228.7,188.5 1232.6,188.2 1232.6,201.8 1228.7,202" fill="#b0958c"/><polygon points="1235.6,188 1239.1,187.7 1239.1,201.5 1235.6,201.6" fill="#b0958c"/><polygon points="1227,218.7 1239.9,218.5 1239.9,248.3 1227,247.7" fill="#15171a"/><polygon points="1227.9,220.6 1239.3,220.4 1239.3,224.9 1227.9,224.9" fill="#a09a98"/><polygon points="1228.7,228.4 1232.6,228.4 1232.6,244.5 1228.7,244.3" fill="#b0958c"/><polygon points="1235.6,228.4 1239.1,228.4 1239.1,244.7 1235.6,244.6" fill="#b0958c"/><polygon points="1227,260.1 1239.9,260.9 1239.9,292.7 1227,291" fill="#15171a"/><polygon points="1227.9,262.1 1239.3,263 1239.3,267.7 1227.9,266.8" fill="#a09a98"/><polygon points="1228.7,270.5 1232.6,270.9 1232.6,288 1228.7,287.5" fill="#b0958c"/><polygon points="1235.6,271.1 1239.1,271.4 1239.1,288.8 1235.6,288.4" fill="#b0958c"/><polygon points="1247.3,176.4 1254.7,175.6 1254.7,205.6 1247.3,205.9" fill="#15171a"/><polygon points="1247.9,178.5 1254.3,177.9 1254.3,182.5 1247.9,183.1" fill="#8e9499"/><polygon points="1248.3,187 1250.6,186.8 1250.6,200.9 1248.3,201" fill="#b69a90"/><polygon points="1252.2,186.7 1254.3,186.5 1254.3,200.7 1252.2,200.8" fill="#b69a90"/><polygon points="1247.3,218.4 1254.7,218.2 1254.7,248.9 1247.3,248.6" fill="#15171a"/><polygon points="1247.9,220.3 1254.3,220.2 1254.3,224.9 1247.9,224.9" fill="#aaa29e"/><polygon points="1248.3,228.4 1250.6,228.5 1250.6,245.1 1248.3,245.1" fill="#b69a90"/><polygon points="1252.2,228.5 1254.3,228.5 1254.3,245.3 1252.2,245.2" fill="#b69a90"/><polygon points="1247.3,261.5 1254.7,262 1254.7,294.6 1247.3,293.7" fill="#15171a"/><polygon points="1247.9,263.6 1254.3,264 1254.3,269 1247.9,268.5" fill="#aaa29e"/><polygon points="1248.3,272.3 1250.6,272.5 1250.6,290.2 1248.3,290" fill="#b69a90"/><polygon points="1252.2,272.6 1254.3,272.8 1254.3,290.7 1252.2,290.4" fill="#b69a90"/><polygon points="1262.6,174.8 1276.4,173.5 1276.4,204.7 1262.6,205.2" fill="#15171a"/><polygon points="1263.6,177 1275.7,175.8 1275.7,180.8 1263.6,181.8" fill="#90989c"/><polygon points="1264.3,185.7 1268.8,185.4 1268.8,199.9 1264.3,200.2" fill="#ba9d93"/><polygon points="1271.7,185.1 1275.7,184.8 1275.7,199.6 1271.7,199.8" fill="#ba9d93"/><polygon points="1262.6,218.1 1276.4,217.9 1276.4,249.9 1262.6,249.3" fill="#15171a"/><polygon points="1263.6,220 1275.7,219.9 1275.7,224.9 1263.6,225" fill="#b1a7a3"/><polygon points="1264.3,228.5 1268.8,228.5 1268.8,245.8 1264.3,245.6" fill="#ba9d93"/><polygon points="1271.7,228.5 1275.7,228.5 1275.7,246 1271.7,245.9" fill="#ba9d93"/><polygon points="1262.6,262.5 1276.4,263.5 1276.4,297.5 1262.6,295.7" fill="#15171a"/><polygon points="1263.6,264.7 1275.7,265.5 1275.7,270.9 1263.6,269.9" fill="#b1a7a3"/><polygon points="1264.3,273.7 1268.8,274.1 1268.8,292.5 1264.3,292" fill="#ba9d93"/><polygon points="1271.7,274.4 1275.7,274.8 1275.7,293.4 1271.7,292.9" fill="#ba9d93"/><polygon points="1298.1,171.3 1316.2,169.5 1316.2,203 1298.1,203.8" fill="#15171a"/><polygon points="1299.4,173.4 1315.3,171.9 1315.3,177.6 1299.4,179" fill="#97a0a5"/><polygon points="1300.1,182.9 1306.4,182.4 1306.4,198 1300.1,198.3" fill="#c3a69b"/><polygon points="1309.9,182.1 1315.6,181.7 1315.6,197.5 1309.9,197.8" fill="#c3a69b"/><polygon points="1298.1,217.5 1316.2,217.2 1316.2,251.6 1298.1,250.8" fill="#15171a"/><polygon points="1299.4,219.5 1315.3,219.3 1315.3,225 1299.4,225" fill="#c2b4ad"/><polygon points="1300.1,228.6 1306.4,228.6 1306.4,247.2 1300.1,246.9" fill="#c3a69b"/><polygon points="1309.9,228.6 1315.6,228.7 1315.6,247.5 1309.9,247.3" fill="#c3a69b"/><polygon points="1298.1,265 1316.2,266.2 1316.2,302.8 1298.1,300.4" fill="#15171a"/><polygon points="1299.4,267.2 1315.3,268.3 1315.3,274.4 1299.4,273.1" fill="#c2b4ad"/><polygon points="1300.1,277 1306.4,277.5 1306.4,297.2 1300.1,296.5" fill="#c3a69b"/><polygon points="1309.9,277.8 1315.6,278.4 1315.6,298.4 1309.9,297.7" fill="#c3a69b"/><polygon points="1325,168.6 1333.6,167.7 1333.6,202.3 1325,202.6" fill="#15171a"/><polygon points="1325.6,170.9 1333.2,170.1 1333.2,176.1 1325.6,176.7" fill="#98a1a6"/><polygon points="1325.9,180.8 1329,180.6 1329,196.9 1325.9,197" fill="#c5a79c"/><polygon points="1330.6,180.5 1333.3,180.3 1333.3,196.6 1330.6,196.8" fill="#c5a79c"/><polygon points="1325,217 1333.6,216.9 1333.6,252.4 1325,252" fill="#15171a"/><polygon points="1325.6,219.1 1333.2,219 1333.2,224.9 1325.6,224.9" fill="#c4b6af"/><polygon points="1325.9,228.7 1329,228.7 1329,248 1325.9,247.9" fill="#c5a79c"/><polygon points="1330.6,228.7 1333.3,228.7 1333.3,248.1 1330.6,248" fill="#c5a79c"/><polygon points="1325,266.8 1333.6,267.4 1333.6,305.2 1325,304" fill="#15171a"/><polygon points="1325.6,269.1 1333.2,269.6 1333.2,275.9 1325.6,275.3" fill="#c4b6af"/><polygon points="1325.9,279.3 1329,279.6 1329,300.1 1325.9,299.7" fill="#c5a79c"/><polygon points="1330.6,279.7 1333.3,280 1333.3,300.6 1330.6,300.3" fill="#c5a79c"/><polygon points="1261,256.9 1277,257.8 1277,298.4 1261,296.3" fill="#2c3132"/><polygon points="1160,215.7 1180,215.1 1180,246.3 1160,245.4" fill="#2c3132"/><polygon points="1166,215.5 1170,215.4 1170,245.9 1166,245.7" fill="#d66e40"/><polygon points="1055.6,183 1061.2,182.3 1061.2,269.4 1055.6,268.6" fill="#d66e40"/><polygon points="1055.6,183 1057.6,182.8 1057.6,268.9 1055.6,268.6" fill="#e27b4d"/><polygon points="1059.9,182.4 1061.2,182.3 1061.2,269.4 1059.9,269.2" fill="#a04e26"/><path d="M1055.6 183L1055.6 268.6" stroke="#3b1c0e" stroke-width="0.4503997335109926"/><path d="M1061.2 182.3L1061.2 269.4" stroke="#3b1c0e" stroke-width="0.4503997335109926"/><polygon points="1063.6,181.9 1066.8,181.5 1066.8,270.1 1063.6,269.7" fill="#d66e40"/><polygon points="1063.6,181.9 1064.7,181.8 1064.7,269.8 1063.6,269.7" fill="#e27b4d"/><polygon points="1065.8,181.6 1066.8,181.5 1066.8,270.1 1065.8,270" fill="#a04e26"/><path d="M1063.6 181.9L1063.6 269.7" stroke="#3b1c0e" stroke-width="0.4610592938041305"/><path d="M1066.8 181.5L1066.8 270.1" stroke="#3b1c0e" stroke-width="0.4610592938041305"/><polygon points="1072.4,180.7 1075.5,180.2 1075.5,271.3 1072.4,270.9" fill="#d66e40"/><polygon points="1072.4,180.7 1073.5,180.5 1073.5,271 1072.4,270.9" fill="#e27b4d"/><polygon points="1074.6,180.4 1075.5,180.2 1075.5,271.3 1074.6,271.2" fill="#a04e26"/><path d="M1072.4 180.7L1072.4 270.9" stroke="#3b1c0e" stroke-width="0.47278481012658247"/><path d="M1075.5 180.2L1075.5 271.3" stroke="#3b1c0e" stroke-width="0.47278481012658247"/><polygon points="1077.5,180 1081.1,179.5 1081.1,272.1 1077.5,271.6" fill="#d66e40"/><polygon points="1077.5,180 1078.8,179.8 1078.8,271.7 1077.5,271.6" fill="#e27b4d"/><polygon points="1080,179.6 1081.1,179.5 1081.1,272.1 1080,271.9" fill="#a04e26"/><path d="M1077.5 180L1077.5 271.6" stroke="#3b1c0e" stroke-width="0.47958027981345774"/><path d="M1081.1 179.5L1081.1 272.1" stroke="#3b1c0e" stroke-width="0.47958027981345774"/><polygon points="1087.5,178.6 1092.8,177.8 1092.8,273.6 1087.5,272.9" fill="#d66e40"/><polygon points="1087.5,178.6 1089.4,178.3 1089.4,273.2 1087.5,272.9" fill="#e27b4d"/><polygon points="1091.5,178 1092.8,177.8 1092.8,273.6 1091.5,273.5" fill="#a04e26"/><path d="M1087.5 178.6L1087.5 272.9" stroke="#3b1c0e" stroke-width="0.4929047301798801"/><path d="M1092.8 177.8L1092.8 273.6" stroke="#3b1c0e" stroke-width="0.4929047301798801"/><polygon points="1095,177.5 1098.7,177 1098.7,274.4 1095,273.9" fill="#d66e40"/><polygon points="1095,177.5 1096.3,177.3 1096.3,274.1 1095,273.9" fill="#e27b4d"/><polygon points="1097.6,177.1 1098.7,177 1098.7,274.4 1097.6,274.3" fill="#a04e26"/><path d="M1095 177.5L1095 273.9" stroke="#3b1c0e" stroke-width="0.5028980679546969"/><path d="M1098.7 177L1098.7 274.4" stroke="#3b1c0e" stroke-width="0.5028980679546969"/><polygon points="1101.4,176.6 1105.6,176 1105.6,275.4 1101.4,274.8" fill="#d66e40"/><polygon points="1101.4,176.6 1102.9,176.4 1102.9,275 1101.4,274.8" fill="#e27b4d"/><polygon points="1104.3,176.2 1105.6,176 1105.6,275.4 1104.3,275.2" fill="#a04e26"/><path d="M1101.4 176.6L1101.4 274.8" stroke="#3b1c0e" stroke-width="0.5114257161892074"/><path d="M1105.6 176L1105.6 275.4" stroke="#3b1c0e" stroke-width="0.5114257161892074"/><polygon points="1113,175 1121,173.8 1121,277.4 1113,276.3" fill="#d66e40"/><polygon points="1120,174 1121,173.8 1121,277.4 1120,277.3" fill="#b85a30"/><path d="M1113 175L1113 276.3" stroke="#3b1c0e" stroke-width="0.5268820786142572"/><path d="M1121 173.8L1121 277.4" stroke="#3b1c0e" stroke-width="0.5268820786142572"/><polygon points="1129,172.7 1133,172.1 1133,279 1129,278.5" fill="#d66e40"/><polygon points="1129,172.7 1130.4,172.5 1130.4,278.7 1129,278.5" fill="#e27b4d"/><polygon points="1131.8,172.3 1133,172.1 1133,279 1131.8,278.9" fill="#a04e26"/><path d="M1129 172.7L1129 278.5" stroke="#3b1c0e" stroke-width="0.548201199200533"/><path d="M1133 172.1L1133 279" stroke="#3b1c0e" stroke-width="0.548201199200533"/><polygon points="1141.8,170.9 1145.8,170.3 1145.8,280.8 1141.8,280.2" fill="#d66e40"/><polygon points="1141.8,170.9 1143.2,170.7 1143.2,280.4 1141.8,280.2" fill="#e27b4d"/><polygon points="1144.6,170.5 1145.8,170.3 1145.8,280.8 1144.6,280.6" fill="#a04e26"/><path d="M1141.8 170.9L1141.8 280.2" stroke="#3b1c0e" stroke-width="0.5652564956695536"/><path d="M1145.8 170.3L1145.8 280.8" stroke="#3b1c0e" stroke-width="0.5652564956695536"/><polygon points="1155.4,169 1159.9,168.4 1159.9,282.7 1155.4,282.1" fill="#d66e40"/><polygon points="1155.4,169 1157,168.8 1157,282.3 1155.4,282.1" fill="#e27b4d"/><polygon points="1158.6,168.5 1159.9,168.4 1159.9,282.7 1158.6,282.5" fill="#a04e26"/><path d="M1155.4 169L1155.4 282.1" stroke="#3b1c0e" stroke-width="0.5833777481678882"/><path d="M1159.9 168.4L1159.9 282.7" stroke="#3b1c0e" stroke-width="0.5833777481678882"/><polygon points="1170,166.9 1174.9,166.2 1174.9,284.7 1170,284" fill="#d66e40"/><polygon points="1170,166.9 1171.7,166.7 1171.7,284.3 1170,284" fill="#e27b4d"/><polygon points="1173.6,166.4 1174.9,166.2 1174.9,284.7 1173.6,284.5" fill="#a04e26"/><path d="M1170 166.9L1170 284" stroke="#3b1c0e" stroke-width="0.6028314457028648"/><path d="M1174.9 166.2L1174.9 284.7" stroke="#3b1c0e" stroke-width="0.6028314457028648"/><polygon points="1180,165.5 1188,164.4 1188,286.4 1180,285.4" fill="#d66e40"/><polygon points="1187,164.5 1188,164.4 1188,286.4 1187,286.3" fill="#b85a30"/><path d="M1180 165.5L1180 285.4" stroke="#3b1c0e" stroke-width="0.6161558960692872"/><path d="M1188 164.4L1188 286.4" stroke="#3b1c0e" stroke-width="0.6161558960692872"/><polygon points="1202.5,162.4 1208,161.6 1208,289.1 1202.5,288.4" fill="#d66e40"/><polygon points="1202.5,162.4 1204.4,162.1 1204.4,288.7 1202.5,288.4" fill="#e27b4d"/><polygon points="1206.7,161.8 1208,161.6 1208,289.1 1206.7,289" fill="#a04e26"/><path d="M1202.5 162.4L1202.5 288.4" stroke="#3b1c0e" stroke-width="0.6461359093937376"/><path d="M1208 161.6L1208 289.1" stroke="#3b1c0e" stroke-width="0.6461359093937376"/><polygon points="1220,159.9 1225.5,159.1 1225.5,291.5 1220,290.8" fill="#d66e40"/><polygon points="1220,159.9 1221.9,159.6 1221.9,291 1220,290.8" fill="#e27b4d"/><polygon points="1224.2,159.3 1225.5,159.1 1225.5,291.5 1224.2,291.3" fill="#a04e26"/><path d="M1220 159.9L1220 290.8" stroke="#3b1c0e" stroke-width="0.6694536975349767"/><path d="M1225.5 159.1L1225.5 291.5" stroke="#3b1c0e" stroke-width="0.6694536975349767"/><polygon points="1240.5,157 1246.5,156.2 1246.5,294.3 1240.5,293.5" fill="#d66e40"/><polygon points="1240.5,157 1242.6,156.7 1242.6,293.8 1240.5,293.5" fill="#e27b4d"/><polygon points="1245.2,156.3 1246.5,156.2 1246.5,294.3 1245.2,294.1" fill="#a04e26"/><path d="M1240.5 157L1240.5 293.5" stroke="#3b1c0e" stroke-width="0.6967688207861427"/><path d="M1246.5 156.2L1246.5 294.3" stroke="#3b1c0e" stroke-width="0.6967688207861427"/><polygon points="1255,155 1261,154.1 1261,296.3 1255,295.5" fill="#d66e40"/><polygon points="1255,155 1257.1,154.7 1257.1,295.8 1255,295.5" fill="#e27b4d"/><polygon points="1259.7,154.3 1261,154.1 1261,296.3 1259.7,296.1" fill="#a04e26"/><path d="M1255 155L1255 295.5" stroke="#3b1c0e" stroke-width="0.7160892738174551"/><path d="M1261 154.1L1261 296.3" stroke="#3b1c0e" stroke-width="0.7160892738174551"/><polygon points="1277,151.9 1296,149.2 1296,301 1277,298.4" fill="#d66e40"/><polygon points="1295,149.3 1296,149.2 1296,301 1295,300.9" fill="#b85a30"/><path d="M1277 151.9L1277 298.4" stroke="#3b1c0e" stroke-width="0.7454030646235843"/><path d="M1296 149.2L1296 301" stroke="#3b1c0e" stroke-width="0.7454030646235843"/><polygon points="1317,146.2 1324,145.2 1324,304.8 1317,303.8" fill="#d66e40"/><polygon points="1323,145.4 1324,145.2 1324,304.8 1323,304.6" fill="#b85a30"/><path d="M1317 146.2L1317 303.8" stroke="#3b1c0e" stroke-width="0.7987008660892738"/><path d="M1324 145.2L1324 304.8" stroke="#3b1c0e" stroke-width="0.7987008660892738"/><polygon points="1334,143.8 1355.5,140.8 1355.5,309 1334,306.1" fill="#d66e40"/><polygon points="1354.5,140.9 1355.5,140.8 1355.5,309 1354.5,308.9" fill="#b85a30"/><path d="M1334 143.8L1334 306.1" stroke="#3b1c0e" stroke-width="0.8213524317121919"/><path d="M1355.5 140.8L1355.5 309" stroke="#3b1c0e" stroke-width="0.8213524317121919"/><path d="M1055.6 195.6L1061.2 195.1" stroke="#3b1c0e" stroke-width="0.35"/><path d="M1063.6 194.8L1066.8 194.5" stroke="#3b1c0e" stroke-width="0.35"/><path d="M1072.4 193.9L1075.5 193.6" stroke="#3b1c0e" stroke-width="0.35"/><path d="M1077.5 193.4L1081.1 193.1" stroke="#3b1c0e" stroke-width="0.35"/><path d="M1087.5 192.4L1092.8 191.9" stroke="#3b1c0e" stroke-width="0.35"/><path d="M1095 191.7L1098.7 191.3" stroke="#3b1c0e" stroke-width="0.35"/><path d="M1101.4 191L1105.6 190.6" stroke="#3b1c0e" stroke-width="0.35"/><path d="M1113 189.9L1121 189.1" stroke="#3b1c0e" stroke-width="0.5"/><path d="M1129 188.3L1133 187.9" stroke="#3b1c0e" stroke-width="0.35"/><path d="M1141.8 187L1145.8 186.6" stroke="#3b1c0e" stroke-width="0.35"/><path d="M1155.4 185.6L1159.9 185.2" stroke="#3b1c0e" stroke-width="0.35"/><path d="M1170 184.1L1174.9 183.6" stroke="#3b1c0e" stroke-width="0.35"/><path d="M1180 183.1L1188 182.3" stroke="#3b1c0e" stroke-width="0.5"/><path d="M1202.5 180.9L1208 180.3" stroke="#3b1c0e" stroke-width="0.35"/><path d="M1220 179.1L1225.5 178.6" stroke="#3b1c0e" stroke-width="0.35"/><path d="M1240.5 177.1L1246.5 176.5" stroke="#3b1c0e" stroke-width="0.35"/><path d="M1255 175.6L1261 175" stroke="#3b1c0e" stroke-width="0.35"/><path d="M1277 173.4L1296 171.5" stroke="#3b1c0e" stroke-width="0.5"/><path d="M1317 169.4L1324 168.7" stroke="#3b1c0e" stroke-width="0.5"/><path d="M1334 167.7L1355.5 165.5" stroke="#3b1c0e" stroke-width="0.5"/><polygon points="1055.3,214.5 1355.5,202.6 1355.5,210.4 1055.3,218.5" fill="#fbfbf2" stroke="#77776f" stroke-width="0.4"/><polygon points="1055.3,240.7 1355.5,254.2 1355.5,262.4 1055.3,244.9" fill="#fbfbf2" stroke="#77776f" stroke-width="0.4"/><polygon points="1055.3,218.2 1355.5,209.8 1355.5,211 1055.3,218.8" fill="#5a5a55"/><polygon points="1055.3,244.6 1355.5,261.8 1355.5,263 1055.3,245.2" fill="#5a5a55"/><polygon points="1081,241.3 1099,242.1 1099,248.2 1081,247.2" fill="#3a3d3f" stroke="#222" stroke-width="0.3"/><path d="M1090 242.3L1090 246.9" stroke="#222" stroke-width="0.5"/><path d="M1355.5 202.6L1355.5 210.4" stroke="#888" stroke-width="0.6"/><path d="M1355.5 254.2L1355.5 262.4" stroke="#888" stroke-width="0.6"/><path d="M1357.9 202.6L1357.9 210.7" stroke="#999" stroke-width="0.4"/><path d="M1357.9 254.2L1357.9 262.4" stroke="#999" stroke-width="0.4"/><polygon points="1055.3,268.6 1355.5,309 1355.5,355.4 1055.3,292.2" fill="#2f3335" stroke="#17191a" stroke-width="0.6"/><path d="M1056.3 272.1L1215 295.2" stroke="#474b4e" stroke-width="0.35"/><path d="M1056.3 275.5L1215 300.3" stroke="#474b4e" stroke-width="0.35"/><path d="M1056.3 278.9L1215 305.4" stroke="#474b4e" stroke-width="0.35"/><path d="M1056.3 282.2L1215 310.5" stroke="#474b4e" stroke-width="0.35"/><path d="M1056.3 285.6L1215 315.6" stroke="#474b4e" stroke-width="0.35"/><path d="M1056.3 289L1215 320.7" stroke="#474b4e" stroke-width="0.35"/><path d="M1059.3 272.5L1059.3 275.9" stroke="#474b4e" stroke-width="0.35"/><path d="M1059.3 279.4L1059.3 282.8" stroke="#474b4e" stroke-width="0.35"/><path d="M1059.3 286.2L1059.3 289.6" stroke="#474b4e" stroke-width="0.35"/><path d="M1062.3 269.5L1062.3 273" stroke="#474b4e" stroke-width="0.35"/><path d="M1062.3 276.4L1062.3 279.9" stroke="#474b4e" stroke-width="0.35"/><path d="M1062.3 283.3L1062.3 286.7" stroke="#474b4e" stroke-width="0.35"/><path d="M1062.3 290.2L1062.3 293.6" stroke="#474b4e" stroke-width="0.35"/><path d="M1066 273.5L1066 277" stroke="#474b4e" stroke-width="0.35"/><path d="M1066 280.5L1066 284" stroke="#474b4e" stroke-width="0.35"/><path d="M1066 287.4L1066 290.9" stroke="#474b4e" stroke-width="0.35"/><path d="M1070.1 270.6L1070.1 274.1" stroke="#474b4e" stroke-width="0.35"/><path d="M1070.1 277.6L1070.1 281.2" stroke="#474b4e" stroke-width="0.35"/><path d="M1070.1 284.7L1070.1 288.2" stroke="#474b4e" stroke-width="0.35"/><path d="M1070.1 291.7L1070.1 295.3" stroke="#474b4e" stroke-width="0.35"/><path d="M1074.5 274.7L1074.5 278.3" stroke="#474b4e" stroke-width="0.35"/><path d="M1074.5 281.9L1074.5 285.5" stroke="#474b4e" stroke-width="0.35"/><path d="M1074.5 289.1L1074.5 292.6" stroke="#474b4e" stroke-width="0.35"/><path d="M1079.4 271.8L1079.4 275.4" stroke="#474b4e" stroke-width="0.35"/><path d="M1079.4 279.1L1079.4 282.7" stroke="#474b4e" stroke-width="0.35"/><path d="M1079.4 286.3L1079.4 290" stroke="#474b4e" stroke-width="0.35"/><path d="M1079.4 293.6L1079.4 297.2" stroke="#474b4e" stroke-width="0.35"/><path d="M1084.5 276.2L1084.5 279.9" stroke="#474b4e" stroke-width="0.35"/><path d="M1084.5 283.6L1084.5 287.2" stroke="#474b4e" stroke-width="0.35"/><path d="M1084.5 290.9L1084.5 294.6" stroke="#474b4e" stroke-width="0.35"/><path d="M1089.8 273.2L1089.8 277" stroke="#474b4e" stroke-width="0.35"/><path d="M1089.8 280.7L1089.8 284.5" stroke="#474b4e" stroke-width="0.35"/><path d="M1089.8 288.2L1089.8 291.9" stroke="#474b4e" stroke-width="0.35"/><path d="M1089.8 295.7L1089.8 299.4" stroke="#474b4e" stroke-width="0.35"/><path d="M1095.4 277.8L1095.4 281.6" stroke="#474b4e" stroke-width="0.35"/><path d="M1095.4 285.4L1095.4 289.2" stroke="#474b4e" stroke-width="0.35"/><path d="M1095.4 293L1095.4 296.8" stroke="#474b4e" stroke-width="0.35"/><path d="M1101.3 274.8L1101.3 278.6" stroke="#474b4e" stroke-width="0.35"/><path d="M1101.3 282.5L1101.3 286.4" stroke="#474b4e" stroke-width="0.35"/><path d="M1101.3 290.2L1101.3 294.1" stroke="#474b4e" stroke-width="0.35"/><path d="M1101.3 298L1101.3 301.8" stroke="#474b4e" stroke-width="0.35"/><path d="M1107.3 279.5L1107.3 283.4" stroke="#474b4e" stroke-width="0.35"/><path d="M1107.3 287.4L1107.3 291.3" stroke="#474b4e" stroke-width="0.35"/><path d="M1107.3 295.3L1107.3 299.2" stroke="#474b4e" stroke-width="0.35"/><path d="M1113.5 276.4L1113.5 280.4" stroke="#474b4e" stroke-width="0.35"/><path d="M1113.5 284.4L1113.5 288.4" stroke="#474b4e" stroke-width="0.35"/><path d="M1113.5 292.4L1113.5 296.4" stroke="#474b4e" stroke-width="0.35"/><path d="M1113.5 300.4L1113.5 304.4" stroke="#474b4e" stroke-width="0.35"/><path d="M1119.9 281.4L1119.9 285.4" stroke="#474b4e" stroke-width="0.35"/><path d="M1119.9 289.5L1119.9 293.6" stroke="#474b4e" stroke-width="0.35"/><path d="M1119.9 297.6L1119.9 301.7" stroke="#474b4e" stroke-width="0.35"/><path d="M1126.5 278.2L1126.5 282.3" stroke="#474b4e" stroke-width="0.35"/><path d="M1126.5 286.5L1126.5 290.6" stroke="#474b4e" stroke-width="0.35"/><path d="M1126.5 294.7L1126.5 298.9" stroke="#474b4e" stroke-width="0.35"/><path d="M1126.5 303L1126.5 307.2" stroke="#474b4e" stroke-width="0.35"/><path d="M1133.3 283.3L1133.3 287.5" stroke="#474b4e" stroke-width="0.35"/><path d="M1133.3 291.7L1133.3 295.9" stroke="#474b4e" stroke-width="0.35"/><path d="M1133.3 300.2L1133.3 304.4" stroke="#474b4e" stroke-width="0.35"/><path d="M1140.2 280L1140.2 284.3" stroke="#474b4e" stroke-width="0.35"/><path d="M1140.2 288.6L1140.2 292.9" stroke="#474b4e" stroke-width="0.35"/><path d="M1140.2 297.2L1140.2 301.5" stroke="#474b4e" stroke-width="0.35"/><path d="M1140.2 305.8L1140.2 310.1" stroke="#474b4e" stroke-width="0.35"/><path d="M1147.3 285.3L1147.3 289.7" stroke="#474b4e" stroke-width="0.35"/><path d="M1147.3 294.1L1147.3 298.4" stroke="#474b4e" stroke-width="0.35"/><path d="M1147.3 302.8L1147.3 307.2" stroke="#474b4e" stroke-width="0.35"/><path d="M1154.5 281.9L1154.5 286.4" stroke="#474b4e" stroke-width="0.35"/><path d="M1154.5 290.8L1154.5 295.3" stroke="#474b4e" stroke-width="0.35"/><path d="M1154.5 299.7L1154.5 304.2" stroke="#474b4e" stroke-width="0.35"/><path d="M1154.5 308.6L1154.5 313.1" stroke="#474b4e" stroke-width="0.35"/><path d="M1161.9 287.5L1161.9 292" stroke="#474b4e" stroke-width="0.35"/><path d="M1161.9 296.5L1161.9 301" stroke="#474b4e" stroke-width="0.35"/><path d="M1161.9 305.6L1161.9 310.1" stroke="#474b4e" stroke-width="0.35"/><path d="M1169.4 283.9L1169.4 288.5" stroke="#474b4e" stroke-width="0.35"/><path d="M1169.4 293.2L1169.4 297.8" stroke="#474b4e" stroke-width="0.35"/><path d="M1169.4 302.4L1169.4 307" stroke="#474b4e" stroke-width="0.35"/><path d="M1169.4 311.6L1169.4 316.2" stroke="#474b4e" stroke-width="0.35"/><path d="M1177 289.7L1177 294.3" stroke="#474b4e" stroke-width="0.35"/><path d="M1177 299L1177 303.7" stroke="#474b4e" stroke-width="0.35"/><path d="M1177 308.4L1177 313.1" stroke="#474b4e" stroke-width="0.35"/><path d="M1184.8 286L1184.8 290.8" stroke="#474b4e" stroke-width="0.35"/><path d="M1184.8 295.6L1184.8 300.3" stroke="#474b4e" stroke-width="0.35"/><path d="M1184.8 305.1L1184.8 309.9" stroke="#474b4e" stroke-width="0.35"/><path d="M1184.8 314.7L1184.8 319.4" stroke="#474b4e" stroke-width="0.35"/><path d="M1192.6 291.9L1192.6 296.8" stroke="#474b4e" stroke-width="0.35"/><path d="M1192.6 301.7L1192.6 306.5" stroke="#474b4e" stroke-width="0.35"/><path d="M1192.6 311.4L1192.6 316.2" stroke="#474b4e" stroke-width="0.35"/><path d="M1200.6 288.1L1200.6 293.1" stroke="#474b4e" stroke-width="0.35"/><path d="M1200.6 298L1200.6 303" stroke="#474b4e" stroke-width="0.35"/><path d="M1200.6 307.9L1200.6 312.9" stroke="#474b4e" stroke-width="0.35"/><path d="M1200.6 317.8L1200.6 322.8" stroke="#474b4e" stroke-width="0.35"/><path d="M1208.8 294.3L1208.8 299.3" stroke="#474b4e" stroke-width="0.35"/><path d="M1208.8 304.3L1208.8 309.4" stroke="#474b4e" stroke-width="0.35"/><path d="M1208.8 314.4L1208.8 319.5" stroke="#474b4e" stroke-width="0.35"/><polygon points="1069,273.5 1075,270 1091,268.5 1097,270.5 1097,276 1082,279 1072,283 1069,282" fill="#77797a"/><circle cx="1219.5" cy="300.8" r="2.1" fill="#0e0f10"/><circle cx="1238.5" cy="304.3" r="2.1" fill="#0e0f10"/><circle cx="1272.5" cy="309.8" r="2.1" fill="#0e0f10"/><polygon points="1334.5,317 1340.3,318 1340.3,324.3 1334.5,323.3" fill="#0e0f10"/><path d="M1355.5 309L1355.5 355.4" stroke="#111" stroke-width="0.7"/><path d="M1355.5 140.8L1355.5 309" stroke="#3b1c0e" stroke-width="0.7"/><path d="M1055.3 183.1L1055.3 292.2" stroke="#111" stroke-width="0.6"/><path d="M1052 291.5L1056.5 290.5" stroke="#0c0c0c" stroke-width="1"/><path d="M1313.5 215.6L1313.5 207.5" stroke="#1d2bd8" stroke-width="1"/><path d="M1313.5 215.6L1320 215.8" stroke="#1fa01f" stroke-width="1.2"/><path d="M1313.5 215.6L1307.5 215.9" stroke="#c41d1d" stroke-width="1.2"/></svg>
<div class="abs" style="left:943px;top:37px;width:32px;height:32px;background:#545454"></div>
<svg style="left:943px;top:37px" width="32" height="32" viewBox="0 0 32 32" fill="none" stroke="#e0e0e0" stroke-width="1.300"><path d="M4.500 10.500v-6h6M21.500 4.500h6v6M27.500 21.500v6h-6M10.500 27.500h-6v-6"/><path d="M16 9.200l5.800 3.300v6.800L16 22.600l-5.800-3.300v-6.800z" fill="#e0e0e0" stroke="none"/></svg>
<!-- gizmo -->
<svg style="left:0;top:0" width="1835" height="814" viewBox="0 0 1835 814">
<circle cx="992.800" cy="294.700" r="46.300" fill="#322d2c"/>
<path d="M993 293V274" stroke="#1010ee" stroke-width="2"/><path d="M993 267.500l2.800 8h-5.600z" fill="#1010ee"/>
<path d="M996 295.200h14" stroke="#10d810" stroke-width="2"/><path d="M1019 295.200l-9-2.600v5.200z" fill="#10d810"/>
<path d="M990 295.300h-14" stroke="#f01010" stroke-width="1.800"/><circle cx="979" cy="295.300" r="2.700" fill="#f01010"/>
<circle cx="992.800" cy="295" r="4" fill="#9c9c9c"/><circle cx="992" cy="294" r="1.600" fill="#c4c4c0"/>
<text x="991.500" y="262.500" font-family="Liberation Sans,sans-serif" font-size="8.500" font-weight="bold" fill="#1515f0">Z</text>
<text x="1025.600" y="295" font-family="Liberation Sans,sans-serif" font-size="9" fill="#10d810">Y</text>
<text x="968" y="295" font-family="Liberation Sans,sans-serif" font-size="9" fill="#f01010">X</text>
<!-- view cube -->
<polygon points="1683.700,84 1730,76.700 1730,148.400 1683.700,138.800" fill="#fff"/>
<polygon points="1732,77 1756.200,87 1756.200,136.900 1732,148.200" fill="#fff"/>
<text transform="translate(1691.700,119.800) scale(.394,1)" font-family="Liberation Sans,sans-serif" font-size="20.500" fill="#8e8e8e">Справа</text>
<text transform="translate(1737.900,120.300) scale(.232,1) skewY(-2)" font-family="Liberation Sans,sans-serif" font-size="22" fill="#8e8e8e">Сзади</text>
</svg>
<!-- TABLE PANEL -->
<div class="abs" style="left:943px;top:425px;width:846px;height:37px;background:#545454;border-radius:4px 4px 0 0"></div>
<div class="abs" style="left:943px;top:461.500px;width:846px;height:32px;background:#676767"></div>
<div class="abs white" style="left:943px;top:461.500px;width:60px;height:32.500px"></div>
<div class="abs white" style="left:943px;top:493.500px;width:846px;height:311px"></div>
<div class="abs" style="left:943px;top:492.500px;width:60px;height:1px;background:#ddd"></div>
<div class="abs" style="left:943px;top:804px;width:846px;height:8px;background:#676767"></div>
<div class="abs" style="left:943px;top:804px;width:438px;height:8px;background:#3d95b4"></div>
<div class="abs" style="left:1366px;top:431px;width:42px;height:2.500px;background:#3d95b4"></div>
<div class="abs" style="left:1093px;top:461px;width:1px;height:32px;background:#575757"></div>
<div class="abs" style="left:1379px;top:461px;width:1px;height:32px;background:#575757"></div>
<div class="abs" style="left:1571px;top:461px;width:1px;height:32px;background:#575757"></div>
<svg style="left:956px;top:439px" width="20" height="16" viewBox="0 0 20 16" fill="#e4e4e4"><rect x=".5" y=".8" width="13.500" height="1.800"/><rect x=".5" y="5.200" width="13.500" height="1.800"/><rect x=".5" y="9.600" width="9.500" height="1.800"/><path d="M11.800 8.800l5 3.200-5 3.200z"/></svg>
<div class="t" style="letter-spacing:0.169px;left:987.600px;top:439.100px;font-size:14px;color:#ececec">Коллизии (количество: 0)</div>
<div class="abs" style="left:962px;top:471px;width:15px;height:15px;border:2px solid #3d95b4;border-radius:2.500px;background:#fff"></div>
<div class="t" style="transform:scaleX(0.9591);left:1019.700px;top:471.500px;font-size:12px;font-weight:bold;color:#ededed">Статус</div>
<div class="t" style="transform:scaleX(0.9653);left:1109.500px;top:471.500px;font-size:12px;font-weight:bold;color:#ededed">Элемент (Модель A)</div>
<div class="t" style="transform:scaleX(0.9612);left:1395.500px;top:471.500px;font-size:12px;font-weight:bold;color:#ededed">Элемент (Модель B)</div>
<div class="t" style="transform:scaleX(0.9541);left:1587.500px;top:471.500px;font-size:12px;font-weight:bold;color:#ededed">GUID элемента (Модель A)</div>
<div class="t" style="letter-spacing:0.316px;left:1612.600px;top:503.200px;font-size:13.500px;color:#a0a0a0">Отсутствуют данные</div>
<!-- header icons -->
<svg style="left:1618px;top:436px" width="20" height="20" viewBox="0 0 20 20" fill="none" stroke="#ececec" stroke-width="1.600"><rect x="1.500" y="1.500" width="10.500" height="10.500" rx="2"/><path d="M8 12v3.500a2 2 0 0 0 2 2h6.500a2 2 0 0 0 2-2V9a2 2 0 0 0-2-2H12"/></svg>
<svg style="left:1654px;top:437px" width="18" height="19" viewBox="0 0 18 19" fill="none" stroke="#ececec" stroke-width="1.600"><path d="M2 1.800h14M2 17.200h14M9 5v9.200M6 7.800l3-3 3 3M6 11.400l3 3 3-3"/></svg>
<svg style="left:1688px;top:436.500px" width="18" height="20" viewBox="0 0 18 20" fill="none" stroke="#ececec" stroke-width="1.600"><path d="M2 8.200h14M2 11.800h14M9 .5v5M6.200 3l2.800 2.800L11.800 3M9 19.500v-5M6.200 17l2.800-2.800 2.800 2.800"/></svg>
<svg style="left:1721.500px;top:436.500px" width="19" height="19" viewBox="0 0 24 24"><path fill="#ececec" d="M19.430 12.980c.04-.32.070-.64.070-.98s-.03-.66-.07-.98l2.110-1.650c.190-.15.240-.42.120-.64l-2-3.460c-.12-.22-.39-.3-.61-.22l-2.490 1c-.52-.4-1.080-.73-1.690-.98l-.38-2.650C14.460 2.180 14.250 2 14 2h-4c-.25 0-.46.180-.49.420l-.38 2.650c-.61.250-1.170.59-1.690.98l-2.490-1c-.23-.09-.49 0-.61.220l-2 3.460c-.13.220-.07.490.12.640l2.110 1.650c-.4.320-.7.650-.7.980s.3.660.7.980l-2.110 1.650c-.19.150-.24.420-.12.640l2 3.460c.12.220.39.300.61.220l2.490-1c.52.400 1.080.73 1.690.98l.38 2.650c.3.240.24.420.49.420h4c.25 0 .46-.18.490-.42l.38-2.650c.61-.25 1.170-.59 1.690-.98l2.490 1c.23.090.49 0 .61-.22l2-3.460c.12-.22.070-.49-.12-.64l-2.110-1.650zM12 15.500c-1.930 0-3.500-1.570-3.500-3.500s1.570-3.500 3.500-3.500 3.500 1.570 3.500 3.500-1.570 3.500-3.500 3.500z"/></svg>
<svg style="left:1759px;top:442.500px" width="12" height="8" viewBox="0 0 12 8" fill="none" stroke="#ececec" stroke-width="1.600"><path d="M1 1.200l5 5 5-5"/></svg>
<!-- RIGHT TOOLBAR -->
<div class="abs rt"></div>
<div class="sep" style="top:128.500px"></div><div class="sep" style="top:397.500px"></div><div class="sep" style="top:446.500px"></div><div class="sep" style="top:628px"></div><div class="sep" style="top:720.500px"></div>
<div class="abs" style="left:1799px;top:637px;width:32px;height:32px;background:#8b8b8b"></div>
<div class="abs" style="left:1799px;top:681px;width:32px;height:32px;background:#8b8b8b"></div>
<!-- 1 cloud tree (center 1815,61) -->
<svg style="left:1801px;top:47px" width="28" height="28" viewBox="0 0 28 28" fill="none" stroke="#e8e8e8" stroke-width="1.500" stroke-linecap="round" stroke-linejoin="round"><path d="M11 19.500H8.500c-3 0-5.300-2-5.300-4.700s2-4.500 4.300-4.600C7.800 6.500 10.500 4 14 4s6.200 2.500 6.500 6.200c2.300.1 4.300 1.900 4.300 4.600s-2.300 4.700-5.300 4.700H17"/><path d="M14 25V11M14 17l-3.200-3M14 15l3.200-3"/></svg>
<!-- 2 screen capture (1815,105) -->
<svg style="left:1801px;top:91px" width="28" height="28" viewBox="0 0 28 28" fill="none" stroke="#e8e8e8" stroke-width="1.300"><path d="M11 19.500H1.500v-17h23.500v7M6.500 22.500h4.500v-3"/><path d="M12 15v-4h4M22.500 11h4v4M26.500 22.500v4h-4M16 26.500h-4v-4" stroke-width="1.200"/><path d="M19.300 13.600l4.400 2.500v5L19.300 23.600l-4.400-2.500v-5z" fill="#e8e8e8" stroke="none"/></svg>
<!-- 3 ruler (1815,154) -->
<svg style="left:1801.500px;top:147.400px" width="28" height="16" viewBox="0 0 28 16" fill="none" stroke="#e8e8e8" stroke-width="1.400"><rect x="1" y="1.500" width="25.500" height="8.500"/><path d="M.4 12.700h26.700" stroke-width="1.800"/><path d="M4.500 10V7M8 10V5.500M11.500 10V7M15 10V5.500M18.500 10V7M22 10V5.500M24.800 10V7" stroke-width="1.300"/></svg>
<!-- 4 section planes (1815,198) -->
<svg style="left:1801px;top:184px" width="28" height="28" viewBox="0 0 28 28" fill="none" stroke="#e8e8e8" stroke-width="1.300" stroke-linejoin="round"><path d="M.8 16.500l9-6.300h17.500l-9 6.300z"/><path d="M9 9L18.900.3V19.400L9 28z" fill="#e2e2e2" stroke="none"/></svg>
<!-- 5 box section (1815,242) -->
<svg style="left:1801px;top:229px" width="28" height="26" viewBox="0 0 28 26" fill="none" stroke="#e8e8e8" stroke-width="1.200" stroke-linejoin="round"><path d="M2 8l7-6h17v15l-7 6.500H2zM2 8h17v15.500M19 8l7-6M9 2v15l-7 6.500M9 17h17"/><path d="M11 8l5-5.500V17.500l-5 5.500z" fill="#e0e0e0" stroke="none"/></svg>
<!-- 6 plan (1815,286) -->
<svg style="left:1801px;top:273px" width="29" height="26" viewBox="0 0 29 26" fill="none" stroke="#e8e8e8" stroke-width="1.300" stroke-linejoin="round"><path d="M25.800 4.500h2.300v19.700H2.700v-2.300h23.100z" fill="#e2e2e2" stroke="none"/><path d="M3.800 2.800h21.400v18.500H.6V6z"/><path d="M.6 11.500h24.600M12.500 2.800v18.500" stroke-width="1.100" stroke-dasharray="3.200 1.400"/><path d="M18.400 21.300V19h6.800" stroke-width="1.200"/></svg>
<!-- 7 target (1815,330) -->
<svg style="left:1802px;top:317px" width="26" height="26" viewBox="0 0 26 26" fill="none" stroke="#e8e8e8" stroke-width="1.900"><circle cx="13" cy="13" r="7.600" stroke-width="2.300"/><circle cx="13" cy="13" r="4.300" fill="#e8e8e8" stroke="none"/><path d="M13 0.500v4M13 21.500v4M0.500 13h4M21.500 13h4"/></svg>
<!-- 8 flag (1815,374) -->
<svg style="left:1801px;top:360px" width="28" height="28" viewBox="0 0 28 28" fill="none" stroke="#e8e8e8" stroke-width="1.200" stroke-linejoin="round"><circle cx="14" cy="14" r="12.600"/><path d="M9 21V8.500c3-1.500 5 .5 7.500.3 1.500-.1 2.500-.5 4-1v7.500c-1.500.5-2.500.9-4 1-2.500.2-4.500-1.800-7.500-.3" stroke-width="1.400"/></svg>
<!-- 9 grid lines (1815,422) -->
<svg style="left:1799px;top:406px" width="32" height="32" viewBox="0 0 32 32" fill="none" stroke="#e8e8e8" stroke-width="1.100"><path d="M1.200 21.400L30.700 4M1.800 30.600L30.700 14.400M2.400 15.600L20.900 26M11 9.200L29.500 19.600"/></svg>
<div class="t" style="left:1799.600px;top:414.300px;font-size:6px;font-weight:bold;color:#e8e8e8">1</div>
<div class="t" style="left:1810.100px;top:408.300px;font-size:6px;font-weight:bold;color:#e8e8e8">2</div>
<!-- 10 dashed cube (1815,472) -->
<svg style="left:1803px;top:460px" width="24" height="24" viewBox="0 0 24 24" fill="none" stroke="#e8e8e8"><rect x=".6" y=".6" width="22.800" height="22.800" stroke-width="1.100" stroke-dasharray="2.200 1.800"/><path d="M12 6l5.500 3v6.500L12 18.500 6.500 15.500V9zM6.500 9l5.500 3 5.500-3M12 12v6.500" stroke-width="1.100" stroke-linejoin="round"/></svg>
<!-- 11 eye (1815,516) -->
<svg style="left:1803px;top:504px" width="24" height="24" viewBox="0 0 24 24" fill="none" stroke="#e8e8e8"><rect x=".6" y=".6" width="22.800" height="22.800" stroke-width="1.100" stroke-dasharray="2.200 1.800"/><path d="M4.500 12c2-3.300 4.500-4.800 7.500-4.800s5.500 1.500 7.500 4.800c-2 3.300-4.500 4.800-7.500 4.800S6.500 15.300 4.500 12z" fill="#e8e8e8" stroke="none"/><circle cx="12" cy="12" r="2.700" fill="#555" stroke="none"/><circle cx="12" cy="12" r="1.200" fill="#e8e8e8" stroke="none"/></svg>
<!-- 12 eye off (1815,560) -->
<svg style="left:1803px;top:548px" width="24" height="24" viewBox="0 0 24 24" fill="none" stroke="#e8e8e8"><rect x=".6" y=".6" width="22.800" height="22.800" stroke-width="1.100" stroke-dasharray="2.200 1.800"/><path d="M4.500 12c2-3.300 4.500-4.800 7.500-4.800s5.500 1.500 7.500 4.800c-2 3.300-4.500 4.800-7.500 4.800S6.500 15.300 4.500 12z" fill="#e8e8e8" stroke="none"/><circle cx="12" cy="12" r="2.700" fill="#555" stroke="none"/><path d="M5.500 4.500l13 15" stroke="#555" stroke-width="3.200"/><path d="M5.500 4.500l13 15" stroke-width="1.400"/></svg>
<!-- 13 select X (1815,604) -->
<svg style="left:1802px;top:591px" width="28" height="28" viewBox="0 0 28 28" fill="none" stroke="#e8e8e8"><rect x=".6" y=".6" width="22.800" height="22.800" stroke-width="1.100" stroke-dasharray="2.200 1.800"/><rect x="10.500" y="10.500" width="16" height="16" fill="#e4e4e4" stroke="none"/><path d="M14 14l9 9M23 14l-9 9" stroke="#333" stroke-width="1.400"/></svg>
<!-- 14 solid cube -->
<svg style="left:1799px;top:637px" width="32" height="32" viewBox="0 0 32 32" stroke="#e8e8e8" stroke-width="1.200" stroke-linejoin="round"><path d="M5 8.500L16 5l11 3.500-10 4.500z" fill="#747474"/><path d="M5 8.500l12 4.500v15L7.500 22z" fill="#eee"/><path d="M17 13l10-4.500-2 13.500-8 6z" fill="#777"/></svg>
<!-- 15 orbit -->
<svg style="left:1799px;top:681px" width="32" height="32" viewBox="0 0 32 32" fill="none" stroke="#e8e8e8" stroke-width="1.500"><ellipse cx="16" cy="16" rx="11.500" ry="6.300"/><ellipse cx="16" cy="16" rx="6.300" ry="11"/><path d="M16 12.500v4l-3.500 3.500M16 16.500l3.500 3.500" stroke-width="1.100"/></svg>
<svg style="left:1798px;top:803px" width="6" height="7" viewBox="0 0 6 7"><path d="M.5.500v5.500h4.500z" fill="#e8e8e8"/></svg>
</body></html>
